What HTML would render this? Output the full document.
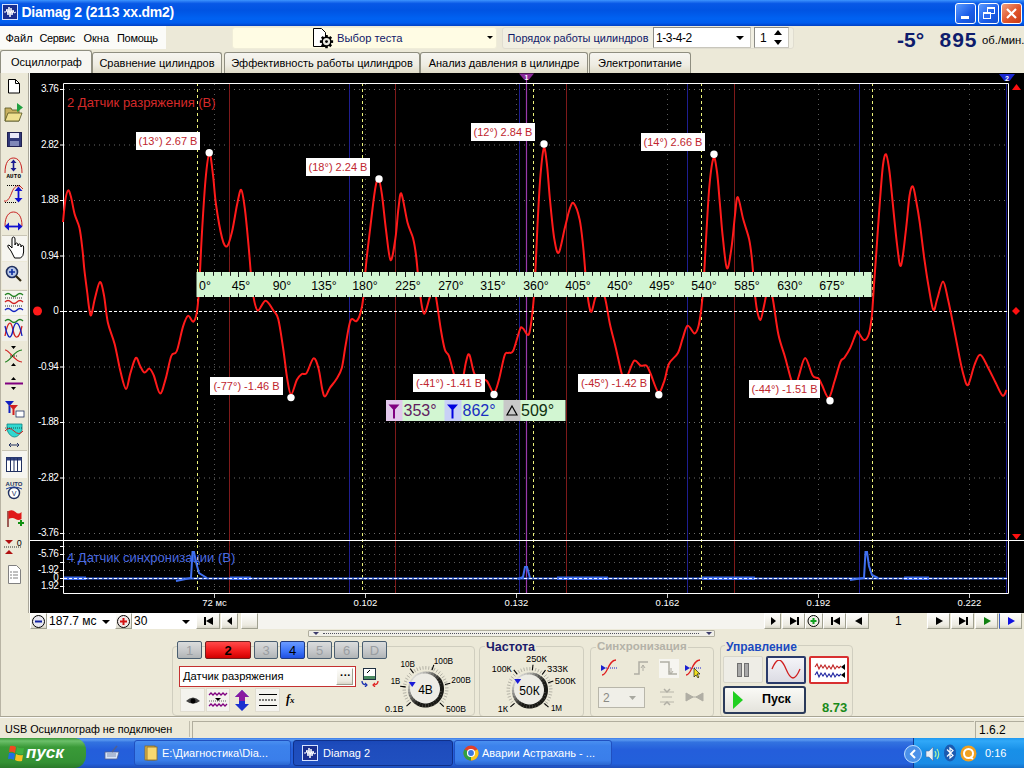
<!DOCTYPE html>
<html><head><meta charset="utf-8">
<style>
*{box-sizing:border-box;margin:0;padding:0}
html,body{width:1024px;height:768px;overflow:hidden;background:#ECE9D8;font-family:"Liberation Sans",sans-serif;font-size:11px;color:#000;position:relative}
.a{position:absolute}
.t{position:absolute;white-space:nowrap;line-height:1}
#title{left:0;top:0;width:1024px;height:26px;background:linear-gradient(#3D95FF 0%,#2A7CF4 5%,#0858E6 14%,#0054E3 40%,#0062F2 72%,#005CEE 88%,#0040C4 100%)}
.wbtn{position:absolute;top:3px;width:21px;height:21px;border:1px solid #fff;border-radius:3px;background:linear-gradient(135deg,#5B9BFF,#1A5CE8 60%,#1450D0)}
.tab{position:absolute;top:52px;height:21px;border:1px solid #8F8E80;border-bottom:none;border-radius:3px 3px 0 0;background:linear-gradient(#F6F5F0,#EEECE2 60%,#E0DCC8)}
.tab span{position:absolute;top:5px;left:0;right:0;text-align:center;font-size:11px;white-space:nowrap;line-height:1}
.tbi{position:absolute;left:3px;width:23px}
.btn{position:absolute;background:linear-gradient(#FDFDFB,#ECEAE0 80%,#D8D5C8);border:1px solid #fff;border-right-color:#A0A090;border-bottom-color:#A0A090}
.grp{position:absolute;border:1px solid #D0CEBF;border-radius:4px}
.chb{position:absolute;top:641px;height:18px;border:1px solid #4A5E70;border-radius:2px;background:linear-gradient(#DADCDC,#C4C6C8 60%,#B0B4B6);color:#9A9EA2;font-size:13px;text-align:center;line-height:17px}
.chb.red{background:linear-gradient(#FF4A4A,#F01818 60%,#D00000);color:#000;font-weight:bold;border-color:#702020}
.chb.blue{background:linear-gradient(#6A9AFF,#3A72F8 60%,#2050E0);color:#000;border-color:#203A80}
.tsk{position:absolute;top:740px;height:26px;border-radius:3px;background:linear-gradient(#4A90F0,#3C82EC 20%,#3A7EEA 80%,#2A66D0);border:1px solid #2050C0}
.tsk.act{background:linear-gradient(#1A48B8,#1E4CBC 20%,#2050C0);border-color:#10308A}
</style></head><body>

<!-- Title bar -->
<div id="title" class="a">
  <div class="a" style="left:2px;top:4px;width:16px;height:16px;background:#1A2F8F;border:1px solid #D8E4FF"></div>
  <svg class="a" style="left:2px;top:4px" width="16" height="16"><polyline points="2,8 4,8 5,5 6,11 7,3 8,13 9,4 10,11 11,6 12,9 14,8" fill="none" stroke="#fff" stroke-width="1"/></svg>
  <div class="t" style="left:21.5px;top:5px;font-size:14px;font-weight:bold;color:#fff;letter-spacing:-0.25px">Diamag 2 (2113 xx.dm2)</div>
  <div class="wbtn" style="left:955px"><div class="a" style="left:5px;top:12px;width:8px;height:3px;background:#fff"></div></div>
  <div class="wbtn" style="left:978px"><div class="a" style="left:8px;top:3px;width:8px;height:7px;border:1px solid #fff;border-top-width:2px"></div><div class="a" style="left:4px;top:8px;width:8px;height:7px;border:1px solid #fff;border-top-width:2px;background:#2E6CF0"></div></div>
  <div class="wbtn" style="left:1001px;background:linear-gradient(135deg,#F0A080,#E0542A 55%,#C83A14)"><svg class="a" style="left:3px;top:3px" width="13" height="13"><path d="M2,2 L11,11 M11,2 L2,11" stroke="#fff" stroke-width="2.2"/></svg></div>
</div>

<!-- Menu -->
<div class="a" style="left:0;top:26px;width:166px;height:23px;background:#FBFBF8"></div>
<div class="t" style="left:5.5px;top:33px;font-size:11px">Файл</div><div class="t" style="left:39.5px;top:33px;font-size:11px;letter-spacing:-0.4px">Сервис</div><div class="t" style="left:83.5px;top:33px;font-size:11px">Окна</div><div class="t" style="left:117px;top:33px;font-size:11px;letter-spacing:-0.3px">Помощь</div>

<!-- Test combo -->
<div class="a" style="left:232px;top:27px;width:265px;height:22px;background:#FFFCE4;border-radius:3px;border:1px solid #F0EDD8"></div>
<svg class="a" style="left:312px;top:28px" width="24" height="21"><path d="M1.5,0.5 h8 l4,4 v14 h-12z" fill="#fff" stroke="#000" stroke-width="1"/><rect x="13.2" y="7.0" width="2.6" height="3" fill="#000" transform="rotate(0 14.5 13.6)"/><rect x="13.2" y="7.0" width="2.6" height="3" fill="#000" transform="rotate(45 14.5 13.6)"/><rect x="13.2" y="7.0" width="2.6" height="3" fill="#000" transform="rotate(90 14.5 13.6)"/><rect x="13.2" y="7.0" width="2.6" height="3" fill="#000" transform="rotate(135 14.5 13.6)"/><rect x="13.2" y="7.0" width="2.6" height="3" fill="#000" transform="rotate(180 14.5 13.6)"/><rect x="13.2" y="7.0" width="2.6" height="3" fill="#000" transform="rotate(225 14.5 13.6)"/><rect x="13.2" y="7.0" width="2.6" height="3" fill="#000" transform="rotate(270 14.5 13.6)"/><rect x="13.2" y="7.0" width="2.6" height="3" fill="#000" transform="rotate(315 14.5 13.6)"/><circle cx="14.5" cy="13.6" r="4.3" fill="#E8E8E0" stroke="#000" stroke-width="1.4"/><circle cx="14.5" cy="13.6" r="1.4" fill="#000"/></svg>
<div class="t" style="left:337px;top:32.5px;font-size:11.2px;color:#101868">Выбор теста</div>
<div class="a" style="left:487px;top:36px;width:0;height:0;border-left:3px solid transparent;border-right:3px solid transparent;border-top:3px solid #000"></div>

<div class="a" style="left:502px;top:27px;width:292px;height:22px;background:#F1EFE2;border-radius:3px;border:1px solid #E0DDD0"></div>
<div class="t" style="left:507.5px;top:32.5px;font-size:10.9px;color:#101868">Порядок работы цилиндров</div>
<div class="a" style="left:653px;top:27px;width:98px;height:21px;background:#fff;border:1px solid #8A8A86;border-right-color:#C8C6BC;border-bottom-color:#C8C6BC"></div>
<div class="t" style="left:656px;top:31.5px;font-size:12px;letter-spacing:-0.4px">1-3-4-2</div>
<div class="a" style="left:736px;top:36px;width:0;height:0;border-left:4px solid transparent;border-right:4px solid transparent;border-top:4px solid #000"></div>
<div class="a" style="left:754px;top:27px;width:35px;height:21px;background:#fff;border:1px solid #8A8A86;border-right-color:#C8C6BC;border-bottom-color:#C8C6BC"></div>
<div class="t" style="left:760px;top:31.5px;font-size:12px">1</div>
<div class="a" style="left:774px;top:30px;width:0;height:0;border-left:4px solid transparent;border-right:4px solid transparent;border-bottom:5px solid #000"></div>
<div class="a" style="left:774px;top:40px;width:0;height:0;border-left:4px solid transparent;border-right:4px solid transparent;border-top:5px solid #000"></div>

<div class="t" style="left:897px;top:29px;font-size:21px;font-weight:bold;color:#0E1C6C">-5°</div>
<div class="t" style="left:939.5px;top:29px;font-size:21px;font-weight:bold;color:#0E1C6C;letter-spacing:1px">895</div>
<div class="t" style="left:982px;top:35px;font-size:11.3px;color:#000">об./мин.</div>

<!-- Tabs -->
<div class="tab" style="left:224px;width:196px"><span>Эффективность работы цилиндров</span></div>
<div class="tab" style="left:420px;width:168px"><span>Анализ давления в цилиндре</span></div>
<div class="tab" style="left:589px;width:102px"><span>Электропитание</span></div>
<div class="tab" style="left:92px;width:130px"><span>Сравнение цилиндров</span></div>
<div class="tab" style="left:0;top:50px;width:92px;height:23px;background:#F7F6F1"><span style="top:6px;left:1px">Осциллограф</span></div>

<!-- Left toolbar -->
<div class="a" style="left:0;top:73px;width:29px;height:540px;background:#ECE9D8"></div>
<div class="a" style="left:0;top:73px;width:1px;height:643px;background:#B8B4A4"></div>
<div class="a" style="left:28px;top:73px;width:1px;height:540px;background:#A8A598"></div><div class="a" style="left:29px;top:73px;width:1px;height:540px;background:#F8F8F4"></div>
<div class="a" style="left:2px;top:235px;width:25px;height:26px;background:#F6F5F0;border-top:1px solid #C9C5B5"></div>
<div class="a" style="left:2px;top:262px;width:25px;height:27px;background:#EFEDE4"></div>
<div class="a" style="left:2px;top:290px;width:25px;height:25px;background:#F6F5F0;border-top:1px solid #C9C5B5"></div>
<div class="a" style="left:2px;top:316px;width:25px;height:25px;background:#F1F0E8"></div>
<div class="a" style="left:2px;top:450px;width:25px;height:28px;background:#F6F5F0;border-top:1px solid #C9C5B5"></div>
<svg class="a" style="left:0;top:73px" width="29" height="540" viewBox="0 73 29 540">
 <!-- new doc -->
 <path d="M8.5,79.5 h7 l4,4 v9.5 h-11z" fill="#fff" stroke="#000"/><path d="M15.5,79.5 v4 h4" fill="none" stroke="#000"/>
 <!-- open folder -->
 <path d="M5,108 h6 l1,2 h7 v11 h-14z" fill="#C8B060" stroke="#505020" stroke-width="0.8"/>
 <path d="M5,121 l3,-8 h14 l-3,8z" fill="#F0E090" stroke="#505020" stroke-width="0.8"/>
 <path d="M17,103 l6,4.5 l-6,4.5z" fill="#20A040"/>
 <!-- save -->
 <rect x="7.5" y="132.5" width="14" height="14" fill="#303878" stroke="#202050"/><rect x="10" y="133" width="9" height="5" fill="#E8E8F8"/><rect x="10" y="141" width="9" height="5" fill="#8088B8"/>
 <!-- auto arc -->
 <path d="M5,173 C5,162 9,158 13.5,158 C18,158 22,162 22,173" fill="none" stroke="#C82020" stroke-width="1"/>
 <path d="M13.5,162 v7" stroke="#1A1A90" stroke-width="1.6"/><path d="M10.5,163 l3,-3.5 l3,3.5z M10.5,168 l3,3.5 l3,-3.5z" fill="#1A1A90"/>
 <text x="13.8" y="177.5" text-anchor="middle" font-size="5.8" font-weight="bold" fill="#000" font-family="Liberation Mono" letter-spacing="0.2">AUTO</text>
 <!-- scale sigmoid -->
 <path d="M4,201 C8,202 10,197 12,192 C14,187 17,185 20,186 L23,189" fill="none" stroke="#C82020" stroke-width="1"/>
 <path d="M7,185.5 h13 M5,202.5 h11" stroke="#000" stroke-width="1" stroke-dasharray="1 1"/>
 <path d="M18.5,190 v9" stroke="#1010D0" stroke-width="1.8"/><path d="M14.5,191 l4,-4.5 l4,4.5z M14.5,198 l4,4.5 l4,-4.5z" fill="#1010D0"/>
 <!-- horiz arc -->
 <path d="M5,226 C5,216 9,212 13.5,212 C18,212 22,216 22,226" fill="none" stroke="#C82020" stroke-width="1"/>
 <path d="M8,226.5 h11" stroke="#1010D0" stroke-width="1.8"/><path d="M9,222.5 l-4.5,4 l4.5,4z M18,222.5 l4.5,4 l-4.5,4z" fill="#1010D0"/>
 <!-- hand -->
 <path d="M11,251 l-3,-4 q-1,-2 1,-2 l3,3 v-9 q0,-2 1.5,-2 q1.5,0 1.5,2 v6 q0,-2 1.5,-2 q1.5,0 1.5,2 v1 q0,-2 1.5,-2 q1.5,0 1.5,2 v1 q0,-1.5 1.3,-1.5 q1.3,0 1.3,1.5 v5 q0,4 -3,6 h-6z" fill="#fff" stroke="#000" stroke-width="1"/>
 <!-- zoom -->
 <circle cx="12" cy="272" r="5.5" fill="#B8C8E8" stroke="#203060" stroke-width="1.6"/><path d="M9,272 h6 M12,269 v6" stroke="#1030A0" stroke-width="1.6"/><path d="M16,276 l5,5" stroke="#302810" stroke-width="2.2"/>
 <!-- waves stacked -->
 <path d="M5,295 q3,-3 6,0 t6,0 t6,0" fill="none" stroke="#208020" stroke-width="1.3"/>
 <path d="M5,298 h18 M5,306 h18" stroke="#000" stroke-width="0.8" stroke-dasharray="1 1"/>
 <path d="M5,302 q3,-3 6,0 t6,0 t6,0" fill="none" stroke="#D02020" stroke-width="1.3"/>
 <path d="M5,310 q3,-3 6,0 t6,0 t6,0" fill="none" stroke="#1020C0" stroke-width="1.3"/>
 <!-- overlap waves -->
 <path d="M5,321 q3,-3 6,0 t6,0 t6,0" fill="none" stroke="#208020" stroke-width="1.3"/>
 <path d="M5,336 C8,320 11,320 13,330 S19,340 22,326" fill="none" stroke="#D02020" stroke-width="1.3"/>
 <path d="M5,326 C8,340 11,340 13,330 S19,320 22,336" fill="none" stroke="#1020C0" stroke-width="1.3"/>
 <!-- cross -->
 <path d="M5,350 C10,350 14,362 22,362" fill="none" stroke="#D02020" stroke-width="1.2"/><path d="M5,362 C10,362 14,350 22,350" fill="none" stroke="#208020" stroke-width="1.2"/>
 <path d="M10,356 h8" stroke="#000" stroke-width="0.8" stroke-dasharray="1 1"/>
 <path d="M11,346 h5 l-2.5,3z M11,366 h5 l-2.5,-3z" fill="#000"/>
 <!-- cursor line -->
 <path d="M11,380 h5 l-2.5,-3z" fill="#000"/><rect x="5" y="382.5" width="18" height="2" fill="#800080"/><path d="M11,387 h5 l-2.5,3z" fill="#000"/>
 <!-- filter -->
 <path d="M5,401 h9 l-3.5,4 v8 h-2 v-8z" fill="#1020C0"/><path d="M9,405 h9 l-3.5,4 v6 h-2 v-6z" fill="#D02020"/><rect x="16" y="411" width="8" height="6" fill="#fff" stroke="#203060" stroke-width="0.8"/>
 <!-- cyan -->
 <path d="M7,424 h15 v6 q-3,7 -7.5,7 q-4.5,0 -7.5,-7z" fill="#30D8D0" stroke="#108080" stroke-width="0.8"/>
 <path d="M5,431 q4,-5 9,0 t9,0" fill="none" stroke="#D02020" stroke-width="1"/><path d="M5,428 h18" stroke="#000" stroke-width="0.6" stroke-dasharray="1 1"/>
 <path d="M9,445 h10 M11,443 l-2,2 l2,2 M17,443 l2,2 l-2,2" fill="none" stroke="#203060" stroke-width="1"/>
 <!-- table -->
 <rect x="6.5" y="457.5" width="15" height="14" fill="#fff" stroke="#203060"/><rect x="6.5" y="457.5" width="15" height="3" fill="#304080"/><path d="M10.5,458 v14 M14,458 v14 M17.5,458 v14" stroke="#203060"/>
 <!-- auto V -->
 <text x="14" y="486" text-anchor="middle" font-size="6" font-weight="bold" fill="#203060" font-family="Liberation Sans">AUTO</text>
 <circle cx="14" cy="493" r="5.5" fill="#fff" stroke="#203060" stroke-width="1.4"/><text x="14" y="496" text-anchor="middle" font-size="7" fill="#203060" font-family="Liberation Sans">V</text>
 <path d="M6,489 q8,-4 16,0" fill="none" stroke="#2040A0" stroke-width="1"/>
 <!-- flag -->
 <path d="M8,511 v16" stroke="#600" stroke-width="1.2"/><path d="M8.5,511 q4,-2 7,1 t6,0 v7 q-3,2 -6,0 t-7,0z" fill="#E01818"/><path d="M18,523 h6 M21,520 v6" stroke="#109010" stroke-width="2"/>
 <!-- zero -->
 <path d="M5,540 h8 l-4,4z M5,554 h8 l-4,-4z" fill="#B01010"/><path d="M4,547 h18" stroke="#000" stroke-width="0.8" stroke-dasharray="1 1"/>
 <text x="19.2" y="545.5" text-anchor="middle" font-size="9" fill="#000" font-family="Liberation Sans">0</text>
 <!-- doc list -->
 <path d="M8.5,565.5 h8 l4,4 v14 h-12z" fill="#fff" stroke="#808080"/><path d="M10,572 h2 M10,575 h2 M10,578 h2 M13,572 h5 M13,575 h5 M13,578 h5" stroke="#606060" stroke-width="0.8"/>
</svg>
<svg class="a" style="left:29px;top:73px" width="995" height="540" viewBox="29 73 995 540">
<rect x="30" y="73" width="994" height="540" fill="#000"/>
<line x1="64" y1="89.5" x2="1007" y2="89.5" stroke="#6a6a6a" stroke-width="1" stroke-dasharray="1 4"/>
<line x1="64" y1="145.0" x2="1007" y2="145.0" stroke="#6a6a6a" stroke-width="1" stroke-dasharray="1 4"/>
<line x1="64" y1="200.5" x2="1007" y2="200.5" stroke="#6a6a6a" stroke-width="1" stroke-dasharray="1 4"/>
<line x1="64" y1="256.0" x2="1007" y2="256.0" stroke="#6a6a6a" stroke-width="1" stroke-dasharray="1 4"/>
<line x1="64" y1="367.0" x2="1007" y2="367.0" stroke="#6a6a6a" stroke-width="1" stroke-dasharray="1 4"/>
<line x1="64" y1="422.5" x2="1007" y2="422.5" stroke="#6a6a6a" stroke-width="1" stroke-dasharray="1 4"/>
<line x1="64" y1="478.0" x2="1007" y2="478.0" stroke="#6a6a6a" stroke-width="1" stroke-dasharray="1 4"/>
<line x1="64" y1="533.5" x2="1007" y2="533.5" stroke="#6a6a6a" stroke-width="1" stroke-dasharray="1 4"/>
<line x1="214.5" y1="84" x2="214.5" y2="593" stroke="#5a5a5a" stroke-width="1" stroke-dasharray="1 4"/>
<line x1="365.5" y1="84" x2="365.5" y2="593" stroke="#5a5a5a" stroke-width="1" stroke-dasharray="1 4"/>
<line x1="516.5" y1="84" x2="516.5" y2="593" stroke="#5a5a5a" stroke-width="1" stroke-dasharray="1 4"/>
<line x1="667.5" y1="84" x2="667.5" y2="593" stroke="#5a5a5a" stroke-width="1" stroke-dasharray="1 4"/>
<line x1="818.5" y1="84" x2="818.5" y2="593" stroke="#5a5a5a" stroke-width="1" stroke-dasharray="1 4"/>
<line x1="969.5" y1="84" x2="969.5" y2="593" stroke="#5a5a5a" stroke-width="1" stroke-dasharray="1 4"/>
<line x1="64" y1="546.5" x2="1007" y2="546.5" stroke="#5a5a5a" stroke-width="1" stroke-dasharray="1 4"/>
<line x1="64" y1="554.5" x2="1007" y2="554.5" stroke="#5a5a5a" stroke-width="1" stroke-dasharray="1 4"/>
<line x1="64" y1="562.5" x2="1007" y2="562.5" stroke="#5a5a5a" stroke-width="1" stroke-dasharray="1 4"/>
<line x1="64" y1="570.5" x2="1007" y2="570.5" stroke="#5a5a5a" stroke-width="1" stroke-dasharray="1 4"/>
<line x1="64" y1="586.5" x2="1007" y2="586.5" stroke="#5a5a5a" stroke-width="1" stroke-dasharray="1 4"/>
<line x1="229.5" y1="84" x2="229.5" y2="593" stroke="#7E1A1A" stroke-width="1"/>
<line x1="395.5" y1="84" x2="395.5" y2="593" stroke="#7E1A1A" stroke-width="1"/>
<line x1="566.5" y1="84" x2="566.5" y2="593" stroke="#7E1A1A" stroke-width="1"/>
<line x1="734.5" y1="84" x2="734.5" y2="593" stroke="#7E1A1A" stroke-width="1"/>
<line x1="349.5" y1="84" x2="349.5" y2="593" stroke="#1E1E90" stroke-width="1"/>
<line x1="519.5" y1="84" x2="519.5" y2="593" stroke="#1E1E90" stroke-width="1"/>
<line x1="687.5" y1="84" x2="687.5" y2="593" stroke="#1E1E90" stroke-width="1"/>
<line x1="859.5" y1="84" x2="859.5" y2="593" stroke="#1E1E90" stroke-width="1"/>
<line x1="1006.5" y1="84" x2="1006.5" y2="593" stroke="#1E1E90" stroke-width="1"/>
<line x1="526.5" y1="78" x2="526.5" y2="593" stroke="#9a3aaa" stroke-width="1.2"/>
<line x1="197.5" y1="83" x2="197.5" y2="593" stroke="#ECF27A" stroke-width="1" stroke-dasharray="3 3"/>
<line x1="362.5" y1="83" x2="362.5" y2="593" stroke="#ECF27A" stroke-width="1" stroke-dasharray="3 3"/>
<line x1="533.5" y1="83" x2="533.5" y2="593" stroke="#ECF27A" stroke-width="1" stroke-dasharray="3 3"/>
<line x1="701.5" y1="83" x2="701.5" y2="593" stroke="#ECF27A" stroke-width="1" stroke-dasharray="3 3"/>
<line x1="872.5" y1="83" x2="872.5" y2="593" stroke="#ECF27A" stroke-width="1" stroke-dasharray="3 3"/>
<line x1="64" y1="311.5" x2="1007" y2="311.5" stroke="#fff" stroke-width="1" stroke-dasharray="3 2"/>
<path d="M63.5,593.5 V83.5 H1008.5 V593.5 H63.5" fill="none" stroke="#fff" stroke-width="1"/>
<line x1="30" y1="540.5" x2="1024" y2="540.5" stroke="#fff" stroke-width="1"/>
<line x1="60" y1="89.5" x2="63" y2="89.5" stroke="#fff"/>
<text x="58.4" y="92.3" text-anchor="end" font-size="10" letter-spacing="-0.5" fill="#fff" font-family="Liberation Sans">3.76</text>
<line x1="60" y1="145.0" x2="63" y2="145.0" stroke="#fff"/>
<text x="58.4" y="147.8" text-anchor="end" font-size="10" letter-spacing="-0.5" fill="#fff" font-family="Liberation Sans">2.82</text>
<line x1="60" y1="200.5" x2="63" y2="200.5" stroke="#fff"/>
<text x="58.4" y="203.3" text-anchor="end" font-size="10" letter-spacing="-0.5" fill="#fff" font-family="Liberation Sans">1.88</text>
<line x1="60" y1="256.0" x2="63" y2="256.0" stroke="#fff"/>
<text x="58.4" y="258.8" text-anchor="end" font-size="10" letter-spacing="-0.5" fill="#fff" font-family="Liberation Sans">0.94</text>
<line x1="60" y1="311.5" x2="63" y2="311.5" stroke="#fff"/>
<text x="58.4" y="314.3" text-anchor="end" font-size="10" letter-spacing="-0.5" fill="#fff" font-family="Liberation Sans">0</text>
<line x1="60" y1="367.0" x2="63" y2="367.0" stroke="#fff"/>
<text x="58.4" y="369.8" text-anchor="end" font-size="10" letter-spacing="-0.5" fill="#fff" font-family="Liberation Sans">-0.94</text>
<line x1="60" y1="422.5" x2="63" y2="422.5" stroke="#fff"/>
<text x="58.4" y="425.3" text-anchor="end" font-size="10" letter-spacing="-0.5" fill="#fff" font-family="Liberation Sans">-1.88</text>
<line x1="60" y1="478.0" x2="63" y2="478.0" stroke="#fff"/>
<text x="58.4" y="480.8" text-anchor="end" font-size="10" letter-spacing="-0.5" fill="#fff" font-family="Liberation Sans">-2.82</text>
<line x1="60" y1="533.5" x2="63" y2="533.5" stroke="#fff"/>
<text x="58.4" y="536.3" text-anchor="end" font-size="10" letter-spacing="-0.5" fill="#fff" font-family="Liberation Sans">-3.76</text>
<line x1="60" y1="546.5" x2="63" y2="546.5" stroke="#fff"/>
<line x1="60" y1="554.5" x2="63" y2="554.5" stroke="#fff"/>
<text x="58.4" y="557.3" text-anchor="end" font-size="10" letter-spacing="-0.5" fill="#fff" font-family="Liberation Sans">-5.76</text>
<line x1="60" y1="562.5" x2="63" y2="562.5" stroke="#fff"/>
<line x1="60" y1="570.5" x2="63" y2="570.5" stroke="#fff"/>
<text x="58.4" y="573.3" text-anchor="end" font-size="10" letter-spacing="-0.5" fill="#fff" font-family="Liberation Sans">-1.92</text>
<line x1="60" y1="578.5" x2="63" y2="578.5" stroke="#fff"/>
<text x="58.4" y="581.3" text-anchor="end" font-size="10" letter-spacing="-0.5" fill="#fff" font-family="Liberation Sans">0</text>
<line x1="60" y1="586.5" x2="63" y2="586.5" stroke="#fff"/>
<text x="58.4" y="589.3" text-anchor="end" font-size="10" letter-spacing="-0.5" fill="#fff" font-family="Liberation Sans">1.92</text>
<line x1="214.5" y1="594" x2="214.5" y2="598" stroke="#ccc"/>
<text x="214.5" y="606" text-anchor="middle" font-size="9.5" fill="#fff" font-family="Liberation Sans">72 мс</text>
<line x1="365.5" y1="594" x2="365.5" y2="598" stroke="#ccc"/>
<text x="365.5" y="606" text-anchor="middle" font-size="9.5" fill="#fff" font-family="Liberation Sans">0.102</text>
<line x1="516.5" y1="594" x2="516.5" y2="598" stroke="#ccc"/>
<text x="516.5" y="606" text-anchor="middle" font-size="9.5" fill="#fff" font-family="Liberation Sans">0.132</text>
<line x1="667.5" y1="594" x2="667.5" y2="598" stroke="#ccc"/>
<text x="667.5" y="606" text-anchor="middle" font-size="9.5" fill="#fff" font-family="Liberation Sans">0.162</text>
<line x1="818.5" y1="594" x2="818.5" y2="598" stroke="#ccc"/>
<text x="818.5" y="606" text-anchor="middle" font-size="9.5" fill="#fff" font-family="Liberation Sans">0.192</text>
<line x1="969.5" y1="594" x2="969.5" y2="598" stroke="#ccc"/>
<text x="969.5" y="606" text-anchor="middle" font-size="9.5" fill="#fff" font-family="Liberation Sans">0.222</text>
<text x="67" y="106.5" font-size="13" fill="#D42A2A" font-family="Liberation Sans">2 Датчик разряжения (В)</text>
<text x="67" y="562" font-size="13" fill="#4A6AE0" font-family="Liberation Sans">4 Датчик синхронизации (В)</text>
<line x1="64" y1="578.5" x2="1007" y2="578.5" stroke="#3A68E8" stroke-width="2"/>
<rect x="64" y="576.5" width="22" height="3.5" fill="#3A68E8"/>
<rect x="230" y="576.5" width="21" height="3.5" fill="#3A68E8"/>
<rect x="557" y="576.5" width="51" height="3.5" fill="#3A68E8"/>
<rect x="702" y="576.5" width="53" height="3.5" fill="#3A68E8"/>
<rect x="904" y="576.5" width="25" height="3.5" fill="#3A68E8"/>
<line x1="64" y1="578.5" x2="1007" y2="578.5" stroke="#fff" stroke-width="1" stroke-dasharray="3 2"/>
<path d="M176,581 L191,578 L192.5,552 L194,552 L196.5,564 L199,573 L207,578" fill="none" stroke="#4070F0" stroke-width="2"/>
<path d="M518,579 L523,577 L525,567 L527,567 L530,578" fill="none" stroke="#4070F0" stroke-width="2"/>
<path d="M850,580 L864,578 L865.5,552 L867,552 L869,566 L872,575 L878,578" fill="none" stroke="#4070F0" stroke-width="2"/>
<path d="M63.0,222.0 C63.4,218.2 64.6,204.3 65.5,199.0 C66.4,193.7 67.3,190.7 68.2,190.4 C69.1,190.1 69.9,193.1 71.0,197.0 C72.1,200.9 73.2,208.8 74.6,214.0 C76.0,219.2 78.2,222.0 79.5,228.0 C80.8,234.0 81.7,243.0 82.5,250.0 C83.3,257.0 83.6,262.8 84.4,270.0 C85.2,277.2 86.5,286.5 87.3,293.0 C88.1,299.5 88.6,305.3 89.3,309.0 C90.0,312.7 90.3,316.9 91.2,315.0 C92.2,313.1 93.7,302.8 95.2,297.3 C96.7,291.8 98.5,282.4 100.0,282.1 C101.5,281.8 102.7,288.6 104.0,295.4 C105.3,302.2 106.1,314.6 107.9,322.7 C109.7,330.8 112.6,336.0 114.7,344.2 C116.8,352.4 118.6,364.1 120.5,371.6 C122.4,379.1 124.4,388.8 126.0,389.1 C127.6,389.4 128.7,378.7 130.3,373.5 C131.9,368.3 134.2,359.2 135.8,357.9 C137.4,356.6 138.6,363.3 140.0,365.7 C141.4,368.1 142.8,372.0 144.4,372.5 C146.0,373.0 147.9,368.1 149.5,368.6 C151.1,369.1 152.0,371.4 153.8,375.5 C155.5,379.6 158.0,392.8 160.0,393.4 C162.0,394.0 163.6,385.6 165.5,379.4 C167.4,373.2 169.4,360.7 171.3,356.0 C173.2,351.3 174.9,355.9 176.8,351.0 C178.8,346.1 181.1,332.5 183.0,326.6 C184.9,320.8 186.3,316.7 188.0,315.9 C189.7,315.1 191.8,322.3 193.2,321.8 C194.6,321.3 195.7,318.3 196.7,313.0 C197.7,307.7 198.1,303.5 199.0,290.0 C199.9,276.5 200.9,250.3 202.0,232.0 C203.1,213.7 204.3,193.1 205.5,180.0 C206.7,166.9 208.2,154.5 209.4,153.7 C210.7,152.9 211.9,166.5 213.0,175.0 C214.1,183.5 214.5,194.1 216.0,204.5 C217.5,214.9 220.2,230.7 222.0,237.7 C223.8,244.7 225.3,247.4 227.0,246.4 C228.7,245.4 230.3,238.7 232.0,231.8 C233.7,224.9 235.5,212.0 237.0,205.0 C238.5,198.0 239.9,189.0 241.2,189.8 C242.6,190.6 243.8,200.8 245.0,210.0 C246.2,219.2 247.5,234.2 248.5,245.0 C249.5,255.8 250.2,266.3 251.0,275.0 C251.8,283.7 252.4,291.1 253.5,297.0 C254.6,302.9 255.8,309.9 257.8,310.5 C259.8,311.1 263.0,300.7 265.6,300.7 C268.2,300.7 271.3,307.4 273.4,310.5 C275.5,313.6 276.7,312.9 278.3,319.3 C279.9,325.7 281.7,338.8 283.2,348.6 C284.7,358.4 285.8,370.2 287.1,377.9 C288.4,385.5 289.4,394.2 291.0,394.5 C292.6,394.8 295.1,383.2 296.9,379.8 C298.7,376.4 300.2,375.1 301.8,374.0 C303.4,372.9 304.7,375.6 306.6,373.0 C308.6,370.4 311.5,359.2 313.5,358.4 C315.5,357.6 316.9,362.8 318.4,368.0 C319.9,373.2 321.2,384.9 322.3,389.6 C323.4,394.3 323.9,396.7 325.2,396.4 C326.5,396.1 328.2,390.5 330.0,387.7 C331.8,384.9 334.0,383.1 336.0,379.8 C338.0,376.5 340.2,373.9 341.8,368.0 C343.4,362.1 344.2,352.6 345.7,344.7 C347.2,336.8 348.8,324.2 350.6,320.3 C352.4,316.4 354.8,322.4 356.4,321.2 C358.0,320.1 359.2,317.3 360.4,313.4 C361.5,309.5 362.4,305.9 363.3,297.8 C364.2,289.7 364.9,276.3 366.0,265.0 C367.1,253.7 368.5,242.5 370.0,230.0 C371.5,217.5 373.6,198.5 375.0,190.0 C376.4,181.5 377.3,178.2 378.5,179.0 C379.7,179.8 380.8,186.5 382.0,195.0 C383.2,203.5 384.6,219.2 386.0,230.0 C387.4,240.8 389.0,258.8 390.6,260.1 C392.2,261.4 394.2,246.4 395.5,237.7 C396.8,229.0 397.5,215.3 398.5,208.0 C399.5,200.7 399.9,191.3 401.4,193.7 C402.9,196.1 405.6,215.1 407.5,222.5 C409.4,229.9 411.6,232.6 413.0,238.0 C414.4,243.4 415.0,247.2 416.0,255.0 C417.0,262.8 418.0,276.3 419.0,285.0 C420.0,293.7 421.1,302.2 422.0,307.0 C422.9,311.8 423.5,313.8 424.3,313.8 C425.1,313.8 426.1,309.8 427.0,307.0 C427.9,304.2 428.8,299.9 429.8,297.2 C430.8,294.5 432.0,291.0 433.0,291.0 C434.0,291.0 434.7,290.7 436.0,297.2 C437.3,303.7 439.4,321.2 440.9,330.0 C442.4,338.8 443.6,345.5 444.9,349.8 C446.2,354.1 447.3,351.8 448.8,355.7 C450.3,359.6 452.2,368.2 453.7,373.3 C455.2,378.4 456.6,384.4 458.0,386.0 C459.4,387.6 460.7,387.0 462.0,383.0 C463.3,379.0 464.8,366.7 466.0,362.0 C467.2,357.3 467.9,352.8 469.3,354.7 C470.7,356.6 472.4,369.4 474.2,373.3 C476.0,377.2 477.9,376.7 480.0,378.0 C482.1,379.3 484.6,378.5 486.9,381.0 C489.2,383.5 491.8,392.8 493.7,392.8 C495.6,392.8 496.8,387.2 498.6,381.0 C500.4,374.8 502.9,360.4 504.5,355.7 C506.1,351.0 506.9,353.6 508.4,352.8 C509.8,352.0 511.3,354.7 513.2,350.8 C515.1,346.9 518.4,333.0 520.0,329.3 C521.6,325.6 521.5,327.6 523.0,328.4 C524.5,329.2 527.3,337.5 528.9,334.2 C530.5,330.9 531.8,317.8 532.8,308.8 C533.8,299.8 534.2,294.0 535.0,280.0 C535.8,266.0 536.6,242.5 537.5,225.0 C538.4,207.5 539.4,187.8 540.5,175.0 C541.6,162.2 542.8,149.8 543.9,148.1 C545.0,146.4 546.0,156.3 547.0,165.0 C548.0,173.7 548.8,187.7 550.0,200.0 C551.2,212.3 552.8,230.1 554.3,238.9 C555.8,247.7 557.0,254.6 558.8,252.6 C560.5,250.6 563.1,234.6 565.0,227.2 C566.9,219.8 568.5,212.0 570.0,208.0 C571.5,204.0 572.2,201.5 573.8,203.4 C575.4,205.3 578.1,212.5 579.6,219.4 C581.1,226.3 581.9,234.9 583.0,245.0 C584.1,255.1 585.1,270.5 586.0,280.0 C586.9,289.5 587.6,296.7 588.5,302.0 C589.4,307.3 590.3,312.4 591.4,311.8 C592.5,311.1 593.9,301.6 595.3,298.0 C596.7,294.4 598.4,290.0 600.0,290.0 C601.6,290.0 603.3,292.2 605.0,298.0 C606.7,303.8 608.2,316.2 610.0,324.5 C611.8,332.8 613.9,339.8 615.8,347.9 C617.7,356.0 620.1,367.8 621.6,373.3 C623.1,378.8 623.9,381.0 625.0,381.0 C626.1,381.0 627.0,376.7 628.5,373.3 C630.0,369.9 632.3,361.9 634.3,360.6 C636.3,359.3 638.7,364.9 640.7,365.7 C642.8,366.5 645.0,364.4 646.6,365.7 C648.2,367.0 648.5,369.1 650.5,373.5 C652.5,377.9 656.0,390.7 658.3,392.0 C660.6,393.3 662.4,386.0 664.2,381.3 C666.0,376.6 666.7,368.5 669.0,363.8 C671.3,359.0 675.6,357.2 677.9,353.0 C680.2,348.8 681.1,342.9 682.7,338.4 C684.3,333.8 685.6,326.5 687.6,325.7 C689.6,324.9 692.7,333.4 694.5,333.5 C696.3,333.6 697.3,330.7 698.4,326.6 C699.5,322.5 700.4,315.9 701.3,309.0 C702.1,302.1 702.7,296.5 703.5,285.0 C704.3,273.5 705.0,256.7 706.0,240.0 C707.0,223.3 708.2,198.7 709.5,185.0 C710.8,171.3 712.4,160.3 713.6,158.1 C714.9,155.9 715.9,164.2 717.0,172.0 C718.1,179.8 719.0,194.1 720.0,205.0 C721.0,215.9 721.6,226.6 722.8,237.2 C724.0,247.8 725.5,266.8 727.0,268.4 C728.5,270.0 730.3,255.9 731.6,247.0 C732.9,238.1 734.0,223.3 735.0,215.0 C736.0,206.7 736.4,196.3 737.8,197.1 C739.2,197.9 741.4,212.6 743.3,219.6 C745.2,226.6 747.6,232.4 749.1,239.1 C750.6,245.8 751.1,251.5 752.0,260.0 C752.9,268.5 753.7,281.7 754.5,290.0 C755.3,298.3 756.0,305.0 757.0,310.0 C758.0,315.0 759.3,320.5 760.5,319.8 C761.7,319.1 762.9,310.6 764.0,306.0 C765.1,301.4 766.0,294.7 767.0,292.0 C768.0,289.3 769.0,288.7 770.0,290.0 C771.0,291.3 771.6,292.6 773.0,300.0 C774.4,307.4 776.4,324.9 778.4,334.5 C780.4,344.1 783.2,350.4 785.3,357.9 C787.4,365.4 789.5,374.5 791.1,379.4 C792.7,384.2 793.7,387.6 795.0,387.0 C796.3,386.4 797.3,380.4 799.0,375.5 C800.7,370.6 802.9,357.9 805.2,357.9 C807.5,357.9 810.4,372.1 812.6,375.5 C814.8,378.9 816.9,376.8 818.5,378.4 C820.1,380.0 820.3,381.8 822.0,385.0 C823.7,388.2 826.7,398.4 828.8,397.7 C830.9,397.0 832.6,387.0 834.6,381.0 C836.6,375.0 838.9,365.5 840.5,361.6 C842.1,357.7 842.8,360.0 844.4,357.7 C846.0,355.4 848.3,352.0 850.3,347.9 C852.2,343.8 854.8,335.9 856.1,333.2 C857.4,330.5 856.7,330.8 858.0,331.9 C859.3,333.0 862.2,339.6 864.0,340.0 C865.8,340.4 867.5,338.1 868.8,334.2 C870.1,330.3 870.9,324.1 871.8,316.6 C872.6,309.1 872.9,300.4 873.7,289.3 C874.5,278.2 875.5,264.9 876.5,250.0 C877.5,235.1 878.9,214.2 880.0,200.0 C881.1,185.8 882.0,172.6 883.0,165.0 C884.0,157.4 885.0,153.7 886.0,154.2 C887.0,154.7 888.1,162.3 889.0,168.0 C889.9,173.7 889.9,175.6 891.3,188.4 C892.6,201.2 895.5,232.2 897.1,245.0 C898.7,257.9 899.5,268.1 901.0,265.5 C902.5,262.9 904.6,241.0 906.0,229.4 C907.4,217.8 908.4,203.2 909.5,196.0 C910.6,188.8 911.7,185.7 912.8,186.4 C913.9,187.1 914.9,194.1 916.0,200.0 C917.1,205.9 918.2,211.6 919.6,221.6 C921.0,231.6 923.0,249.4 924.5,260.0 C926.0,270.6 926.9,277.1 928.4,285.4 C929.9,293.7 931.8,307.5 933.3,309.8 C934.8,312.1 935.6,303.7 937.2,299.0 C938.8,294.3 941.2,281.5 943.0,281.5 C944.8,281.5 946.3,292.2 947.9,299.0 C949.5,305.8 950.8,312.7 952.8,322.5 C954.8,332.3 957.8,348.9 959.6,357.7 C961.4,366.5 962.2,370.6 963.6,375.2 C965.0,379.8 966.2,386.6 968.0,385.0 C969.8,383.4 972.3,370.6 974.3,365.5 C976.3,360.4 977.9,354.4 980.2,354.7 C982.5,355.0 985.4,362.7 988.0,367.4 C990.6,372.1 993.4,378.3 995.8,383.0 C998.2,387.7 1000.8,394.6 1002.6,395.7 C1004.4,396.8 1005.9,390.9 1006.5,389.9" fill="none" stroke="#FF1A1A" stroke-width="2" stroke-linejoin="round"/>
<rect x="196.5" y="272" width="675" height="25" fill="#D2F6D2"/>
<line x1="204.5" y1="272" x2="204.5" y2="275.8" stroke="#1a1a1a" stroke-width="1"/>
<line x1="204.5" y1="295" x2="204.5" y2="297" stroke="#1a1a1a" stroke-width="1"/>
<line x1="213.5" y1="272" x2="213.5" y2="275.8" stroke="#1a1a1a" stroke-width="1"/>
<line x1="213.5" y1="295" x2="213.5" y2="297" stroke="#1a1a1a" stroke-width="1"/>
<line x1="221.5" y1="272" x2="221.5" y2="275.8" stroke="#1a1a1a" stroke-width="1"/>
<line x1="221.5" y1="295" x2="221.5" y2="297" stroke="#1a1a1a" stroke-width="1"/>
<line x1="230.5" y1="272" x2="230.5" y2="275.8" stroke="#1a1a1a" stroke-width="1"/>
<line x1="230.5" y1="295" x2="230.5" y2="297" stroke="#1a1a1a" stroke-width="1"/>
<line x1="238.5" y1="272" x2="238.5" y2="277" stroke="#1a1a1a" stroke-width="1"/>
<line x1="238.5" y1="293.5" x2="238.5" y2="297" stroke="#1a1a1a" stroke-width="1"/>
<line x1="246.5" y1="272" x2="246.5" y2="275.8" stroke="#1a1a1a" stroke-width="1"/>
<line x1="246.5" y1="295" x2="246.5" y2="297" stroke="#1a1a1a" stroke-width="1"/>
<line x1="254.5" y1="272" x2="254.5" y2="275.8" stroke="#1a1a1a" stroke-width="1"/>
<line x1="254.5" y1="295" x2="254.5" y2="297" stroke="#1a1a1a" stroke-width="1"/>
<line x1="263.5" y1="272" x2="263.5" y2="275.8" stroke="#1a1a1a" stroke-width="1"/>
<line x1="263.5" y1="295" x2="263.5" y2="297" stroke="#1a1a1a" stroke-width="1"/>
<line x1="271.5" y1="272" x2="271.5" y2="275.8" stroke="#1a1a1a" stroke-width="1"/>
<line x1="271.5" y1="295" x2="271.5" y2="297" stroke="#1a1a1a" stroke-width="1"/>
<line x1="279.5" y1="272" x2="279.5" y2="277" stroke="#1a1a1a" stroke-width="1"/>
<line x1="279.5" y1="293.5" x2="279.5" y2="297" stroke="#1a1a1a" stroke-width="1"/>
<line x1="287.5" y1="272" x2="287.5" y2="275.8" stroke="#1a1a1a" stroke-width="1"/>
<line x1="287.5" y1="295" x2="287.5" y2="297" stroke="#1a1a1a" stroke-width="1"/>
<line x1="296.5" y1="272" x2="296.5" y2="275.8" stroke="#1a1a1a" stroke-width="1"/>
<line x1="296.5" y1="295" x2="296.5" y2="297" stroke="#1a1a1a" stroke-width="1"/>
<line x1="304.5" y1="272" x2="304.5" y2="275.8" stroke="#1a1a1a" stroke-width="1"/>
<line x1="304.5" y1="295" x2="304.5" y2="297" stroke="#1a1a1a" stroke-width="1"/>
<line x1="313.5" y1="272" x2="313.5" y2="275.8" stroke="#1a1a1a" stroke-width="1"/>
<line x1="313.5" y1="295" x2="313.5" y2="297" stroke="#1a1a1a" stroke-width="1"/>
<line x1="321.5" y1="272" x2="321.5" y2="277" stroke="#1a1a1a" stroke-width="1"/>
<line x1="321.5" y1="293.5" x2="321.5" y2="297" stroke="#1a1a1a" stroke-width="1"/>
<line x1="329.5" y1="272" x2="329.5" y2="275.8" stroke="#1a1a1a" stroke-width="1"/>
<line x1="329.5" y1="295" x2="329.5" y2="297" stroke="#1a1a1a" stroke-width="1"/>
<line x1="337.5" y1="272" x2="337.5" y2="275.8" stroke="#1a1a1a" stroke-width="1"/>
<line x1="337.5" y1="295" x2="337.5" y2="297" stroke="#1a1a1a" stroke-width="1"/>
<line x1="346.5" y1="272" x2="346.5" y2="275.8" stroke="#1a1a1a" stroke-width="1"/>
<line x1="346.5" y1="295" x2="346.5" y2="297" stroke="#1a1a1a" stroke-width="1"/>
<line x1="354.5" y1="272" x2="354.5" y2="275.8" stroke="#1a1a1a" stroke-width="1"/>
<line x1="354.5" y1="295" x2="354.5" y2="297" stroke="#1a1a1a" stroke-width="1"/>
<line x1="362.5" y1="272" x2="362.5" y2="277" stroke="#1a1a1a" stroke-width="1"/>
<line x1="362.5" y1="293.5" x2="362.5" y2="297" stroke="#1a1a1a" stroke-width="1"/>
<line x1="371.5" y1="272" x2="371.5" y2="275.8" stroke="#1a1a1a" stroke-width="1"/>
<line x1="371.5" y1="295" x2="371.5" y2="297" stroke="#1a1a1a" stroke-width="1"/>
<line x1="379.5" y1="272" x2="379.5" y2="275.8" stroke="#1a1a1a" stroke-width="1"/>
<line x1="379.5" y1="295" x2="379.5" y2="297" stroke="#1a1a1a" stroke-width="1"/>
<line x1="388.5" y1="272" x2="388.5" y2="275.8" stroke="#1a1a1a" stroke-width="1"/>
<line x1="388.5" y1="295" x2="388.5" y2="297" stroke="#1a1a1a" stroke-width="1"/>
<line x1="396.5" y1="272" x2="396.5" y2="275.8" stroke="#1a1a1a" stroke-width="1"/>
<line x1="396.5" y1="295" x2="396.5" y2="297" stroke="#1a1a1a" stroke-width="1"/>
<line x1="405.5" y1="272" x2="405.5" y2="277" stroke="#1a1a1a" stroke-width="1"/>
<line x1="405.5" y1="293.5" x2="405.5" y2="297" stroke="#1a1a1a" stroke-width="1"/>
<line x1="414.5" y1="272" x2="414.5" y2="275.8" stroke="#1a1a1a" stroke-width="1"/>
<line x1="414.5" y1="295" x2="414.5" y2="297" stroke="#1a1a1a" stroke-width="1"/>
<line x1="422.5" y1="272" x2="422.5" y2="275.8" stroke="#1a1a1a" stroke-width="1"/>
<line x1="422.5" y1="295" x2="422.5" y2="297" stroke="#1a1a1a" stroke-width="1"/>
<line x1="431.5" y1="272" x2="431.5" y2="275.8" stroke="#1a1a1a" stroke-width="1"/>
<line x1="431.5" y1="295" x2="431.5" y2="297" stroke="#1a1a1a" stroke-width="1"/>
<line x1="439.5" y1="272" x2="439.5" y2="275.8" stroke="#1a1a1a" stroke-width="1"/>
<line x1="439.5" y1="295" x2="439.5" y2="297" stroke="#1a1a1a" stroke-width="1"/>
<line x1="448.5" y1="272" x2="448.5" y2="277" stroke="#1a1a1a" stroke-width="1"/>
<line x1="448.5" y1="293.5" x2="448.5" y2="297" stroke="#1a1a1a" stroke-width="1"/>
<line x1="456.5" y1="272" x2="456.5" y2="275.8" stroke="#1a1a1a" stroke-width="1"/>
<line x1="456.5" y1="295" x2="456.5" y2="297" stroke="#1a1a1a" stroke-width="1"/>
<line x1="465.5" y1="272" x2="465.5" y2="275.8" stroke="#1a1a1a" stroke-width="1"/>
<line x1="465.5" y1="295" x2="465.5" y2="297" stroke="#1a1a1a" stroke-width="1"/>
<line x1="473.5" y1="272" x2="473.5" y2="275.8" stroke="#1a1a1a" stroke-width="1"/>
<line x1="473.5" y1="295" x2="473.5" y2="297" stroke="#1a1a1a" stroke-width="1"/>
<line x1="482.5" y1="272" x2="482.5" y2="275.8" stroke="#1a1a1a" stroke-width="1"/>
<line x1="482.5" y1="295" x2="482.5" y2="297" stroke="#1a1a1a" stroke-width="1"/>
<line x1="490.5" y1="272" x2="490.5" y2="277" stroke="#1a1a1a" stroke-width="1"/>
<line x1="490.5" y1="293.5" x2="490.5" y2="297" stroke="#1a1a1a" stroke-width="1"/>
<line x1="499.5" y1="272" x2="499.5" y2="275.8" stroke="#1a1a1a" stroke-width="1"/>
<line x1="499.5" y1="295" x2="499.5" y2="297" stroke="#1a1a1a" stroke-width="1"/>
<line x1="507.5" y1="272" x2="507.5" y2="275.8" stroke="#1a1a1a" stroke-width="1"/>
<line x1="507.5" y1="295" x2="507.5" y2="297" stroke="#1a1a1a" stroke-width="1"/>
<line x1="516.5" y1="272" x2="516.5" y2="275.8" stroke="#1a1a1a" stroke-width="1"/>
<line x1="516.5" y1="295" x2="516.5" y2="297" stroke="#1a1a1a" stroke-width="1"/>
<line x1="524.5" y1="272" x2="524.5" y2="275.8" stroke="#1a1a1a" stroke-width="1"/>
<line x1="524.5" y1="295" x2="524.5" y2="297" stroke="#1a1a1a" stroke-width="1"/>
<line x1="533.5" y1="272" x2="533.5" y2="277" stroke="#1a1a1a" stroke-width="1"/>
<line x1="533.5" y1="293.5" x2="533.5" y2="297" stroke="#1a1a1a" stroke-width="1"/>
<line x1="541.5" y1="272" x2="541.5" y2="275.8" stroke="#1a1a1a" stroke-width="1"/>
<line x1="541.5" y1="295" x2="541.5" y2="297" stroke="#1a1a1a" stroke-width="1"/>
<line x1="550.5" y1="272" x2="550.5" y2="275.8" stroke="#1a1a1a" stroke-width="1"/>
<line x1="550.5" y1="295" x2="550.5" y2="297" stroke="#1a1a1a" stroke-width="1"/>
<line x1="558.5" y1="272" x2="558.5" y2="275.8" stroke="#1a1a1a" stroke-width="1"/>
<line x1="558.5" y1="295" x2="558.5" y2="297" stroke="#1a1a1a" stroke-width="1"/>
<line x1="567.5" y1="272" x2="567.5" y2="275.8" stroke="#1a1a1a" stroke-width="1"/>
<line x1="567.5" y1="295" x2="567.5" y2="297" stroke="#1a1a1a" stroke-width="1"/>
<line x1="575.5" y1="272" x2="575.5" y2="277" stroke="#1a1a1a" stroke-width="1"/>
<line x1="575.5" y1="293.5" x2="575.5" y2="297" stroke="#1a1a1a" stroke-width="1"/>
<line x1="583.5" y1="272" x2="583.5" y2="275.8" stroke="#1a1a1a" stroke-width="1"/>
<line x1="583.5" y1="295" x2="583.5" y2="297" stroke="#1a1a1a" stroke-width="1"/>
<line x1="592.5" y1="272" x2="592.5" y2="275.8" stroke="#1a1a1a" stroke-width="1"/>
<line x1="592.5" y1="295" x2="592.5" y2="297" stroke="#1a1a1a" stroke-width="1"/>
<line x1="600.5" y1="272" x2="600.5" y2="275.8" stroke="#1a1a1a" stroke-width="1"/>
<line x1="600.5" y1="295" x2="600.5" y2="297" stroke="#1a1a1a" stroke-width="1"/>
<line x1="609.5" y1="272" x2="609.5" y2="275.8" stroke="#1a1a1a" stroke-width="1"/>
<line x1="609.5" y1="295" x2="609.5" y2="297" stroke="#1a1a1a" stroke-width="1"/>
<line x1="617.5" y1="272" x2="617.5" y2="277" stroke="#1a1a1a" stroke-width="1"/>
<line x1="617.5" y1="293.5" x2="617.5" y2="297" stroke="#1a1a1a" stroke-width="1"/>
<line x1="625.5" y1="272" x2="625.5" y2="275.8" stroke="#1a1a1a" stroke-width="1"/>
<line x1="625.5" y1="295" x2="625.5" y2="297" stroke="#1a1a1a" stroke-width="1"/>
<line x1="634.5" y1="272" x2="634.5" y2="275.8" stroke="#1a1a1a" stroke-width="1"/>
<line x1="634.5" y1="295" x2="634.5" y2="297" stroke="#1a1a1a" stroke-width="1"/>
<line x1="642.5" y1="272" x2="642.5" y2="275.8" stroke="#1a1a1a" stroke-width="1"/>
<line x1="642.5" y1="295" x2="642.5" y2="297" stroke="#1a1a1a" stroke-width="1"/>
<line x1="651.5" y1="272" x2="651.5" y2="275.8" stroke="#1a1a1a" stroke-width="1"/>
<line x1="651.5" y1="295" x2="651.5" y2="297" stroke="#1a1a1a" stroke-width="1"/>
<line x1="659.5" y1="272" x2="659.5" y2="277" stroke="#1a1a1a" stroke-width="1"/>
<line x1="659.5" y1="293.5" x2="659.5" y2="297" stroke="#1a1a1a" stroke-width="1"/>
<line x1="667.5" y1="272" x2="667.5" y2="275.8" stroke="#1a1a1a" stroke-width="1"/>
<line x1="667.5" y1="295" x2="667.5" y2="297" stroke="#1a1a1a" stroke-width="1"/>
<line x1="676.5" y1="272" x2="676.5" y2="275.8" stroke="#1a1a1a" stroke-width="1"/>
<line x1="676.5" y1="295" x2="676.5" y2="297" stroke="#1a1a1a" stroke-width="1"/>
<line x1="684.5" y1="272" x2="684.5" y2="275.8" stroke="#1a1a1a" stroke-width="1"/>
<line x1="684.5" y1="295" x2="684.5" y2="297" stroke="#1a1a1a" stroke-width="1"/>
<line x1="693.5" y1="272" x2="693.5" y2="275.8" stroke="#1a1a1a" stroke-width="1"/>
<line x1="693.5" y1="295" x2="693.5" y2="297" stroke="#1a1a1a" stroke-width="1"/>
<line x1="701.5" y1="272" x2="701.5" y2="277" stroke="#1a1a1a" stroke-width="1"/>
<line x1="701.5" y1="293.5" x2="701.5" y2="297" stroke="#1a1a1a" stroke-width="1"/>
<line x1="710.5" y1="272" x2="710.5" y2="275.8" stroke="#1a1a1a" stroke-width="1"/>
<line x1="710.5" y1="295" x2="710.5" y2="297" stroke="#1a1a1a" stroke-width="1"/>
<line x1="718.5" y1="272" x2="718.5" y2="275.8" stroke="#1a1a1a" stroke-width="1"/>
<line x1="718.5" y1="295" x2="718.5" y2="297" stroke="#1a1a1a" stroke-width="1"/>
<line x1="727.5" y1="272" x2="727.5" y2="275.8" stroke="#1a1a1a" stroke-width="1"/>
<line x1="727.5" y1="295" x2="727.5" y2="297" stroke="#1a1a1a" stroke-width="1"/>
<line x1="735.5" y1="272" x2="735.5" y2="275.8" stroke="#1a1a1a" stroke-width="1"/>
<line x1="735.5" y1="295" x2="735.5" y2="297" stroke="#1a1a1a" stroke-width="1"/>
<line x1="744.5" y1="272" x2="744.5" y2="277" stroke="#1a1a1a" stroke-width="1"/>
<line x1="744.5" y1="293.5" x2="744.5" y2="297" stroke="#1a1a1a" stroke-width="1"/>
<line x1="753.5" y1="272" x2="753.5" y2="275.8" stroke="#1a1a1a" stroke-width="1"/>
<line x1="753.5" y1="295" x2="753.5" y2="297" stroke="#1a1a1a" stroke-width="1"/>
<line x1="761.5" y1="272" x2="761.5" y2="275.8" stroke="#1a1a1a" stroke-width="1"/>
<line x1="761.5" y1="295" x2="761.5" y2="297" stroke="#1a1a1a" stroke-width="1"/>
<line x1="770.5" y1="272" x2="770.5" y2="275.8" stroke="#1a1a1a" stroke-width="1"/>
<line x1="770.5" y1="295" x2="770.5" y2="297" stroke="#1a1a1a" stroke-width="1"/>
<line x1="778.5" y1="272" x2="778.5" y2="275.8" stroke="#1a1a1a" stroke-width="1"/>
<line x1="778.5" y1="295" x2="778.5" y2="297" stroke="#1a1a1a" stroke-width="1"/>
<line x1="787.5" y1="272" x2="787.5" y2="277" stroke="#1a1a1a" stroke-width="1"/>
<line x1="787.5" y1="293.5" x2="787.5" y2="297" stroke="#1a1a1a" stroke-width="1"/>
<line x1="795.5" y1="272" x2="795.5" y2="275.8" stroke="#1a1a1a" stroke-width="1"/>
<line x1="795.5" y1="295" x2="795.5" y2="297" stroke="#1a1a1a" stroke-width="1"/>
<line x1="804.5" y1="272" x2="804.5" y2="275.8" stroke="#1a1a1a" stroke-width="1"/>
<line x1="804.5" y1="295" x2="804.5" y2="297" stroke="#1a1a1a" stroke-width="1"/>
<line x1="812.5" y1="272" x2="812.5" y2="275.8" stroke="#1a1a1a" stroke-width="1"/>
<line x1="812.5" y1="295" x2="812.5" y2="297" stroke="#1a1a1a" stroke-width="1"/>
<line x1="821.5" y1="272" x2="821.5" y2="275.8" stroke="#1a1a1a" stroke-width="1"/>
<line x1="821.5" y1="295" x2="821.5" y2="297" stroke="#1a1a1a" stroke-width="1"/>
<line x1="829.5" y1="272" x2="829.5" y2="277" stroke="#1a1a1a" stroke-width="1"/>
<line x1="829.5" y1="293.5" x2="829.5" y2="297" stroke="#1a1a1a" stroke-width="1"/>
<line x1="837.5" y1="272" x2="837.5" y2="275.8" stroke="#1a1a1a" stroke-width="1"/>
<line x1="837.5" y1="295" x2="837.5" y2="297" stroke="#1a1a1a" stroke-width="1"/>
<line x1="846.5" y1="272" x2="846.5" y2="275.8" stroke="#1a1a1a" stroke-width="1"/>
<line x1="846.5" y1="295" x2="846.5" y2="297" stroke="#1a1a1a" stroke-width="1"/>
<line x1="854.5" y1="272" x2="854.5" y2="275.8" stroke="#1a1a1a" stroke-width="1"/>
<line x1="854.5" y1="295" x2="854.5" y2="297" stroke="#1a1a1a" stroke-width="1"/>
<line x1="863.5" y1="272" x2="863.5" y2="275.8" stroke="#1a1a1a" stroke-width="1"/>
<line x1="863.5" y1="295" x2="863.5" y2="297" stroke="#1a1a1a" stroke-width="1"/>
<text x="205.0" y="290" text-anchor="middle" font-size="12.3" fill="#000" font-family="Liberation Sans">0°</text>
<text x="241.0" y="290" text-anchor="middle" font-size="12.3" fill="#000" font-family="Liberation Sans">45°</text>
<text x="282.0" y="290" text-anchor="middle" font-size="12.3" fill="#000" font-family="Liberation Sans">90°</text>
<text x="324.0" y="290" text-anchor="middle" font-size="12.3" fill="#000" font-family="Liberation Sans">135°</text>
<text x="365.0" y="290" text-anchor="middle" font-size="12.3" fill="#000" font-family="Liberation Sans">180°</text>
<text x="408.0" y="290" text-anchor="middle" font-size="12.3" fill="#000" font-family="Liberation Sans">225°</text>
<text x="451.0" y="290" text-anchor="middle" font-size="12.3" fill="#000" font-family="Liberation Sans">270°</text>
<text x="493.0" y="290" text-anchor="middle" font-size="12.3" fill="#000" font-family="Liberation Sans">315°</text>
<text x="536.0" y="290" text-anchor="middle" font-size="12.3" fill="#000" font-family="Liberation Sans">360°</text>
<text x="578.0" y="290" text-anchor="middle" font-size="12.3" fill="#000" font-family="Liberation Sans">405°</text>
<text x="620.0" y="290" text-anchor="middle" font-size="12.3" fill="#000" font-family="Liberation Sans">450°</text>
<text x="662.0" y="290" text-anchor="middle" font-size="12.3" fill="#000" font-family="Liberation Sans">495°</text>
<text x="704.0" y="290" text-anchor="middle" font-size="12.3" fill="#000" font-family="Liberation Sans">540°</text>
<text x="747.0" y="290" text-anchor="middle" font-size="12.3" fill="#000" font-family="Liberation Sans">585°</text>
<text x="790.0" y="290" text-anchor="middle" font-size="12.3" fill="#000" font-family="Liberation Sans">630°</text>
<text x="832.0" y="290" text-anchor="middle" font-size="12.3" fill="#000" font-family="Liberation Sans">675°</text>
<rect x="136" y="132" width="64" height="18" fill="#FFFFFF"/>
<text x="168.0" y="145" text-anchor="middle" font-size="11" fill="#C0262E" font-family="Liberation Sans">(13°) 2.67 В</text>
<circle cx="209.2" cy="152.8" r="3.7" fill="#fff"/>
<rect x="306" y="158" width="64" height="18" fill="#FFFFFF"/>
<text x="338.0" y="171" text-anchor="middle" font-size="11" fill="#C0262E" font-family="Liberation Sans">(18°) 2.24 В</text>
<circle cx="379" cy="179" r="3.7" fill="#fff"/>
<rect x="471" y="123" width="64" height="18" fill="#FFFFFF"/>
<text x="503.0" y="136" text-anchor="middle" font-size="11" fill="#C0262E" font-family="Liberation Sans">(12°) 2.84 В</text>
<circle cx="544" cy="144" r="3.7" fill="#fff"/>
<rect x="641" y="133" width="64" height="18" fill="#FFFFFF"/>
<text x="673.0" y="146" text-anchor="middle" font-size="11" fill="#C0262E" font-family="Liberation Sans">(14°) 2.66 В</text>
<circle cx="714" cy="154.2" r="3.7" fill="#fff"/>
<rect x="210" y="377" width="73" height="18" fill="#FFFFFF"/>
<text x="246.5" y="390" text-anchor="middle" font-size="11" fill="#C0262E" font-family="Liberation Sans">(-77°) -1.46 В</text>
<circle cx="291" cy="397.6" r="3.7" fill="#fff"/>
<rect x="413" y="374" width="72" height="18" fill="#FFFFFF"/>
<text x="449.0" y="387" text-anchor="middle" font-size="11" fill="#C0262E" font-family="Liberation Sans">(-41°) -1.41 В</text>
<circle cx="494" cy="394.5" r="3.7" fill="#fff"/>
<rect x="578" y="374" width="72" height="18" fill="#FFFFFF"/>
<text x="614.0" y="387" text-anchor="middle" font-size="11" fill="#C0262E" font-family="Liberation Sans">(-45°) -1.42 В</text>
<circle cx="658.8" cy="394.8" r="3.7" fill="#fff"/>
<rect x="749" y="380" width="71" height="18" fill="#FFFFFF"/>
<text x="784.5" y="393" text-anchor="middle" font-size="11" fill="#C0262E" font-family="Liberation Sans">(-44°) -1.51 В</text>
<circle cx="830" cy="400.7" r="3.7" fill="#fff"/>
<rect x="386" y="400" width="179.5" height="21" fill="#D2F6D2"/>
<rect x="386" y="400" width="16.5" height="21" fill="#E2C8EC"/>
<rect x="444.5" y="400" width="17" height="21" fill="#C8D0F6"/>
<rect x="503.5" y="400" width="17" height="21" fill="#C8C8C8"/>
<path d="M388.5,404.5 h11 l-4.5,5 v9 h-2 v-9z" fill="#800080"/>
<path d="M447,404.5 h11 l-4.5,5 v9 h-2 v-9z" fill="#0000E0"/>
<path d="M512,406 l5,9 h-10z" fill="none" stroke="#000" stroke-width="1.2"/>
<text x="403.5" y="416" font-size="16" fill="#602060" font-family="Liberation Sans">353°</text>
<text x="462.5" y="416" font-size="16" fill="#1A30C0" font-family="Liberation Sans">862°</text>
<text x="521" y="416" font-size="16" fill="#103010" font-family="Liberation Sans">509°</text>
<path d="M519,73.5 h15 l-5,6 h-5z" fill="#8A2A9A"/><text x="526.5" y="80" text-anchor="middle" font-size="7" font-weight="bold" fill="#fff" font-family="Liberation Sans">1</text>
<path d="M999,74 h16 l-5.5,7 h-5z" fill="#1A28D0"/><text x="1007" y="80.5" text-anchor="middle" font-size="7" font-weight="bold" fill="#fff" font-family="Liberation Sans">2</text>
<path d="M1016.5,84 l4.5,6 h-9z" fill="#FF1010"/>
<path d="M1012,534 h9 l-4.5,5.5z" fill="#FF1010"/>
<path d="M1016,307 l4,4 l-4,4 l-4,-4z" fill="#FF1010"/>
<circle cx="37.5" cy="311" r="4.5" fill="#FF1A1A"/>
</svg>
<!-- Bottom scroll row -->
<div class="a" style="left:29px;top:613px;width:995px;height:17px;background:#ECE9D8"></div>
<div class="a" style="left:258px;top:613px;width:506px;height:16px;background:#F5F4EF;background-image:radial-gradient(#E4E2D6 0.6px,transparent 0.7px);background-size:2px 2px"></div>
<div class="btn" style="left:30px;top:613px;width:17px;height:16px"></div>
<svg class="a" style="left:31px;top:614px" width="15" height="15"><circle cx="7.5" cy="7.5" r="6" fill="#E8E8F0" stroke="#000" stroke-width="1"/><path d="M4,7.5 h7" stroke="#1020A0" stroke-width="2"/></svg>
<div class="a" style="left:47px;top:613px;width:68px;height:16px;background:#fff"></div>
<div class="t" style="left:49px;top:615px;font-size:12px">187.7 мс</div>
<div class="a" style="left:102px;top:620px;width:0;height:0;border-left:4px solid transparent;border-right:4px solid transparent;border-top:4px solid #000"></div>
<div class="btn" style="left:115px;top:613px;width:17px;height:16px"></div>
<svg class="a" style="left:116px;top:614px" width="15" height="15"><circle cx="7.5" cy="7.5" r="6" fill="#F4E8E8" stroke="#000" stroke-width="1"/><path d="M4,7.5 h7 M7.5,4 v7" stroke="#D01010" stroke-width="2"/></svg>
<div class="a" style="left:132px;top:613px;width:64px;height:16px;background:#fff"></div>
<div class="t" style="left:134px;top:615px;font-size:12px">30</div>
<div class="a" style="left:182px;top:620px;width:0;height:0;border-left:4px solid transparent;border-right:4px solid transparent;border-top:4px solid #000"></div>
<div class="btn" style="left:196px;top:613px;width:24px;height:16px"><div class="a" style="left:7px;top:3px;width:2px;height:8px;background:#000"></div><div class="a" style="left:9px;top:3px;border-top:4px solid transparent;border-bottom:4px solid transparent;border-right:7px solid #000"></div></div>
<div class="btn" style="left:221px;top:613px;width:17px;height:16px"><div class="a" style="left:5px;top:3px;border-top:4px solid transparent;border-bottom:4px solid transparent;border-right:5px solid #000"></div></div>
<div class="btn" style="left:241px;top:613px;width:17px;height:16px"></div>

<div class="btn" style="left:764px;top:613px;width:17px;height:16px"><div class="a" style="left:6px;top:3px;border-top:4px solid transparent;border-bottom:4px solid transparent;border-left:5px solid #000"></div></div>
<div class="btn" style="left:782px;top:613px;width:23px;height:16px"><div class="a" style="left:7px;top:3px;border-top:4px solid transparent;border-bottom:4px solid transparent;border-left:7px solid #000"></div><div class="a" style="left:14px;top:3px;width:2px;height:8px;background:#000"></div></div>
<div class="btn" style="left:805px;top:613px;width:18px;height:16px"></div>
<svg class="a" style="left:806px;top:614px" width="15" height="15"><circle cx="7.5" cy="7" r="5.5" fill="#F0F0E8" stroke="#000" stroke-width="1"/><path d="M4.5,7 h6 M7.5,4 v6" stroke="#10A020" stroke-width="2"/></svg>
<div class="btn" style="left:823px;top:613px;width:23px;height:16px"><div class="a" style="left:7px;top:3px;width:2px;height:8px;background:#000"></div><div class="a" style="left:9px;top:3px;border-top:4px solid transparent;border-bottom:4px solid transparent;border-right:7px solid #000"></div></div>
<div class="btn" style="left:846px;top:613px;width:23px;height:16px"><div class="a" style="left:8px;top:3px;border-top:4px solid transparent;border-bottom:4px solid transparent;border-right:7px solid #000"></div></div>
<div class="t" style="left:895px;top:615px;font-size:12px">1</div>
<div class="btn" style="left:927px;top:613px;width:23px;height:16px"><div class="a" style="left:8px;top:3px;border-top:4px solid transparent;border-bottom:4px solid transparent;border-left:7px solid #000"></div></div>
<div class="btn" style="left:951px;top:613px;width:23px;height:16px"><div class="a" style="left:7px;top:3px;border-top:4px solid transparent;border-bottom:4px solid transparent;border-left:7px solid #000"></div><div class="a" style="left:14px;top:3px;width:2px;height:8px;background:#000"></div></div>
<div class="btn" style="left:975px;top:613px;width:23px;height:16px"><div class="a" style="left:8px;top:3px;border-top:4px solid transparent;border-bottom:4px solid transparent;border-left:7px solid #108010"></div></div>
<div class="btn" style="left:999px;top:613px;width:23px;height:16px;border-left:1px solid #4060C0"><div class="a" style="left:8px;top:3px;border-top:4px solid transparent;border-bottom:4px solid transparent;border-left:7px solid #1010E0"></div></div>

<!-- splitter -->
<div class="a" style="left:308px;top:630px;width:407px;height:7px;background:#F0EFE8;border:1px solid #B0AE9E;border-radius:1px"></div>
<div class="a" style="left:323px;top:633px;width:376px;height:1px;border-top:1px dotted #505060"></div>
<div class="a" style="left:313px;top:632px;border-left:3.5px solid transparent;border-right:3.5px solid transparent;border-top:3.5px solid #3A3A6A"></div>
<div class="a" style="left:705.5px;top:632px;border-left:3.5px solid transparent;border-right:3.5px solid transparent;border-top:3.5px solid #3A3A6A"></div>

<!-- group boxes -->
<div class="grp" style="left:172px;top:646px;width:303px;height:70px"></div>
<div class="grp" style="left:479px;top:646px;width:105px;height:71px"></div>
<div class="grp" style="left:590px;top:647px;width:124px;height:70px"></div>
<div class="grp" style="left:720px;top:645px;width:133px;height:72px"></div>

<!-- channel buttons -->
<div class="chb" style="left:177px;width:25px">1</div>
<div class="chb red" style="left:205px;width:46px">2</div>
<div class="chb" style="left:254px;width:24px">3</div>
<div class="chb blue" style="left:280px;width:25px">4</div>
<div class="chb" style="left:307px;width:25px">5</div>
<div class="chb" style="left:334px;width:25px">6</div>
<div class="chb" style="left:362px;width:25px">D</div>

<div class="a" style="left:179px;top:666px;width:177px;height:21px;background:#fff;border:1px solid #C43030"></div>
<div class="t" style="left:183px;top:671px;font-size:11.2px">Датчик разряжения</div>
<div class="btn" style="left:336px;top:668px;width:17px;height:17px"><div class="t" style="left:3px;top:1px;font-size:11px;font-weight:bold">···</div></div>
<svg class="a" style="left:359px;top:667px" width="22" height="20"><rect x="4.5" y="1.5" width="12" height="11" fill="#fff" stroke="#203040"/><rect x="5" y="9" width="11" height="3" fill="#4A8A60"/><path d="M8,6 l3,-3" stroke="#000"/><path d="M3,14 q0,4 5,4" fill="none" stroke="#1A30B0" stroke-width="1.3"/><path d="M6,16 l2,2 l-2,2" fill="none" stroke="#1A30B0" stroke-width="1.2"/><path d="M19,14 q0,4 -5,4" fill="none" stroke="#E02020" stroke-width="1.3"/><path d="M16,16 l-2,2 l2,2" fill="none" stroke="#E02020" stroke-width="1.2"/></svg>

<div class="a" style="left:180px;top:688px;width:25px;height:24px;background:#F4F3EE;border:1px solid #E0DDD0"></div>
<svg class="a" style="left:183px;top:692px" width="20" height="16"><path d="M3,9 q7,-7 14,0 q-7,5 -14,0z" fill="#404040"/><circle cx="10" cy="9" r="2.5" fill="#000"/></svg>
<div class="a" style="left:206px;top:688px;width:24px;height:24px;background:#F4F3EE;border:1px solid #E0DDD0"></div>
<svg class="a" style="left:207px;top:690px" width="22" height="20"><path d="M2,5 l2,-2 l2,2 l2,-2 l2,2 l2,-2 l2,2 l2,-2 l2,2 l2,-2" fill="none" stroke="#800080" stroke-width="1.3"/><path d="M2,16 l2,-2 l2,2 l2,-2 l2,2 l2,-2 l2,2 l2,-2 l2,2 l2,-2" fill="none" stroke="#800080" stroke-width="1.3"/><path d="M8,8 h6 l-3,3z" fill="#000"/><path d="M2,11 h18" stroke="#000" stroke-width="0.6" stroke-dasharray="1 1"/></svg>
<svg class="a" style="left:232px;top:689px" width="20" height="23"><path d="M10,1 l7,7 h-4 v7 h4 l-7,7 l-7,-7 h4 v-7 h-4z" fill="#1A30D0"/><path d="M10,1 l7,7 h-4 v4 h-6 v-4 h-4z" fill="#8A1AA0"/></svg>
<div class="a" style="left:255px;top:688px;width:25px;height:24px;background:#F4F3EE;border:1px solid #E0DDD0"></div>
<svg class="a" style="left:258px;top:692px" width="20" height="16"><path d="M1,2.5 h18 M1,13.5 h18" stroke="#000" stroke-width="1.2"/><path d="M1,8 h18" stroke="#000" stroke-width="1" stroke-dasharray="2 1"/></svg>
<div class="t" style="left:286px;top:693px;font-size:12px;font-weight:bold;font-style:italic;font-family:'Liberation Serif',serif">f<span style="font-size:9px">x</span></div>

<svg class="a" style="left:370px;top:645px" width="220" height="75" viewBox="370 645 220 75">
<line x1="411.0" y1="702.0" x2="408.4" y2="704.4" stroke="#B4B2A6" stroke-width="1"/>
<line x1="409.4" y1="700.0" x2="406.5" y2="701.9" stroke="#B4B2A6" stroke-width="1"/>
<line x1="408.0" y1="697.7" x2="404.9" y2="699.2" stroke="#B4B2A6" stroke-width="1"/>
<line x1="407.0" y1="695.2" x2="403.7" y2="696.3" stroke="#B4B2A6" stroke-width="1"/>
<line x1="406.3" y1="692.6" x2="402.9" y2="693.3" stroke="#B4B2A6" stroke-width="1"/>
<line x1="406.0" y1="690.0" x2="402.5" y2="690.2" stroke="#B4B2A6" stroke-width="1"/>
<line x1="406.1" y1="687.3" x2="402.6" y2="687.0" stroke="#B4B2A6" stroke-width="1"/>
<line x1="406.5" y1="684.7" x2="403.1" y2="683.9" stroke="#B4B2A6" stroke-width="1"/>
<line x1="407.2" y1="682.1" x2="404.0" y2="680.9" stroke="#B4B2A6" stroke-width="1"/>
<line x1="408.3" y1="679.7" x2="405.3" y2="678.1" stroke="#B4B2A6" stroke-width="1"/>
<line x1="409.8" y1="677.5" x2="406.9" y2="675.4" stroke="#B4B2A6" stroke-width="1"/>
<line x1="411.5" y1="675.4" x2="409.0" y2="673.0" stroke="#B4B2A6" stroke-width="1"/>
<line x1="413.5" y1="673.7" x2="411.3" y2="670.9" stroke="#B4B2A6" stroke-width="1"/>
<line x1="415.7" y1="672.2" x2="413.9" y2="669.1" stroke="#B4B2A6" stroke-width="1"/>
<line x1="418.0" y1="671.0" x2="416.7" y2="667.7" stroke="#B4B2A6" stroke-width="1"/>
<line x1="420.6" y1="670.1" x2="419.7" y2="666.7" stroke="#B4B2A6" stroke-width="1"/>
<line x1="423.2" y1="669.6" x2="422.8" y2="666.2" stroke="#B4B2A6" stroke-width="1"/>
<line x1="425.8" y1="669.5" x2="425.9" y2="666.0" stroke="#B4B2A6" stroke-width="1"/>
<line x1="428.5" y1="669.7" x2="429.0" y2="666.3" stroke="#B4B2A6" stroke-width="1"/>
<line x1="431.1" y1="670.3" x2="432.1" y2="667.0" stroke="#B4B2A6" stroke-width="1"/>
<line x1="433.6" y1="671.3" x2="435.0" y2="668.1" stroke="#B4B2A6" stroke-width="1"/>
<line x1="435.9" y1="672.5" x2="437.8" y2="669.6" stroke="#B4B2A6" stroke-width="1"/>
<line x1="438.1" y1="674.1" x2="440.3" y2="671.4" stroke="#B4B2A6" stroke-width="1"/>
<line x1="440.0" y1="675.9" x2="442.6" y2="673.6" stroke="#B4B2A6" stroke-width="1"/>
<line x1="441.6" y1="678.0" x2="444.5" y2="676.1" stroke="#B4B2A6" stroke-width="1"/>
<line x1="443.0" y1="680.3" x2="446.1" y2="678.8" stroke="#B4B2A6" stroke-width="1"/>
<line x1="444.0" y1="682.8" x2="447.3" y2="681.7" stroke="#B4B2A6" stroke-width="1"/>
<line x1="444.7" y1="685.4" x2="448.1" y2="684.7" stroke="#B4B2A6" stroke-width="1"/>
<line x1="445.0" y1="688.0" x2="448.5" y2="687.8" stroke="#B4B2A6" stroke-width="1"/>
<line x1="444.9" y1="690.7" x2="448.4" y2="691.0" stroke="#B4B2A6" stroke-width="1"/>
<line x1="444.5" y1="693.3" x2="447.9" y2="694.1" stroke="#B4B2A6" stroke-width="1"/>
<line x1="443.8" y1="695.8" x2="447.0" y2="697.1" stroke="#B4B2A6" stroke-width="1"/>
<line x1="442.7" y1="698.3" x2="445.7" y2="699.9" stroke="#B4B2A6" stroke-width="1"/>
<line x1="441.2" y1="700.5" x2="444.1" y2="702.6" stroke="#B4B2A6" stroke-width="1"/>
<line x1="439.5" y1="702.5" x2="442.0" y2="705.0" stroke="#B4B2A6" stroke-width="1"/>
<line x1="410.6" y1="702.4" x2="406.5" y2="706.1" stroke="#000" stroke-width="1.1"/>
<line x1="405.6" y1="686.9" x2="400.1" y2="686.3" stroke="#000" stroke-width="1.1"/>
<line x1="413.5" y1="673.0" x2="410.2" y2="668.6" stroke="#000" stroke-width="1.1"/>
<line x1="432.0" y1="670.1" x2="433.8" y2="664.9" stroke="#000" stroke-width="1.1"/>
<line x1="445.0" y1="684.5" x2="450.3" y2="683.3" stroke="#000" stroke-width="1.1"/>
<line x1="439.9" y1="702.9" x2="443.8" y2="706.7" stroke="#000" stroke-width="1.1"/>
<circle cx="425.5" cy="689" r="16.5" fill="#EDECE5"/>
<path d="M442.00,689.00 A16.5,16.5 0 0 0 441.72,685.99" fill="none" stroke="rgb(25,25,21)" stroke-width="4.00"/>
<path d="M441.75,686.13 A16.5,16.5 0 0 0 440.96,683.22" fill="none" stroke="rgb(25,25,21)" stroke-width="4.00"/>
<path d="M441.00,683.36 A16.5,16.5 0 0 0 439.72,680.63" fill="none" stroke="rgb(25,25,21)" stroke-width="4.00"/>
<path d="M439.79,680.75 A16.5,16.5 0 0 0 438.05,678.28" fill="none" stroke="rgb(36,36,32)" stroke-width="3.85"/>
<path d="M438.14,678.39 A16.5,16.5 0 0 0 436.00,676.27" fill="none" stroke="rgb(63,63,59)" stroke-width="3.50"/>
<path d="M436.11,676.36 A16.5,16.5 0 0 0 433.62,674.64" fill="none" stroke="rgb(89,89,85)" stroke-width="3.15"/>
<path d="M433.75,674.71 A16.5,16.5 0 0 0 431.01,673.45" fill="none" stroke="rgb(114,114,110)" stroke-width="2.82"/>
<path d="M431.14,673.50 A16.5,16.5 0 0 0 428.22,672.73" fill="none" stroke="rgb(139,139,135)" stroke-width="2.50"/>
<path d="M428.37,672.75 A16.5,16.5 0 0 0 425.36,672.50" fill="none" stroke="rgb(160,160,156)" stroke-width="2.21"/>
<path d="M425.50,672.50 A16.5,16.5 0 0 0 422.49,672.78" fill="none" stroke="rgb(179,179,175)" stroke-width="1.97"/>
<path d="M422.63,672.75 A16.5,16.5 0 0 0 419.72,673.54" fill="none" stroke="rgb(194,194,190)" stroke-width="1.77"/>
<path d="M419.86,673.50 A16.5,16.5 0 0 0 417.13,674.78" fill="none" stroke="rgb(205,205,201)" stroke-width="1.62"/>
<path d="M417.25,674.71 A16.5,16.5 0 0 0 414.78,676.45" fill="none" stroke="rgb(212,212,208)" stroke-width="1.53"/>
<path d="M414.89,676.36 A16.5,16.5 0 0 0 412.77,678.50" fill="none" stroke="rgb(215,215,211)" stroke-width="1.50"/>
<path d="M412.86,678.39 A16.5,16.5 0 0 0 411.14,680.88" fill="none" stroke="rgb(212,212,208)" stroke-width="1.53"/>
<path d="M411.21,680.75 A16.5,16.5 0 0 0 409.95,683.49" fill="none" stroke="rgb(205,205,201)" stroke-width="1.62"/>
<path d="M410.00,683.36 A16.5,16.5 0 0 0 409.23,686.28" fill="none" stroke="rgb(194,194,190)" stroke-width="1.77"/>
<path d="M409.25,686.13 A16.5,16.5 0 0 0 409.00,689.14" fill="none" stroke="rgb(179,179,175)" stroke-width="1.97"/>
<path d="M409.00,689.00 A16.5,16.5 0 0 0 409.28,692.01" fill="none" stroke="rgb(160,160,156)" stroke-width="2.21"/>
<path d="M409.25,691.87 A16.5,16.5 0 0 0 410.04,694.78" fill="none" stroke="rgb(139,139,135)" stroke-width="2.50"/>
<path d="M410.00,694.64 A16.5,16.5 0 0 0 411.28,697.37" fill="none" stroke="rgb(114,114,110)" stroke-width="2.82"/>
<path d="M411.21,697.25 A16.5,16.5 0 0 0 412.95,699.72" fill="none" stroke="rgb(89,89,85)" stroke-width="3.15"/>
<path d="M412.86,699.61 A16.5,16.5 0 0 0 415.00,701.73" fill="none" stroke="rgb(63,63,59)" stroke-width="3.50"/>
<path d="M414.89,701.64 A16.5,16.5 0 0 0 417.38,703.36" fill="none" stroke="rgb(36,36,32)" stroke-width="3.85"/>
<path d="M417.25,703.29 A16.5,16.5 0 0 0 419.99,704.55" fill="none" stroke="rgb(25,25,21)" stroke-width="4.00"/>
<path d="M419.86,704.50 A16.5,16.5 0 0 0 422.78,705.27" fill="none" stroke="rgb(25,25,21)" stroke-width="4.00"/>
<path d="M422.63,705.25 A16.5,16.5 0 0 0 425.64,705.50" fill="none" stroke="rgb(25,25,21)" stroke-width="4.00"/>
<path d="M425.50,705.50 A16.5,16.5 0 0 0 428.51,705.22" fill="none" stroke="rgb(25,25,21)" stroke-width="4.00"/>
<path d="M428.37,705.25 A16.5,16.5 0 0 0 431.28,704.46" fill="none" stroke="rgb(25,25,21)" stroke-width="4.00"/>
<path d="M431.14,704.50 A16.5,16.5 0 0 0 433.87,703.22" fill="none" stroke="rgb(25,25,21)" stroke-width="4.00"/>
<path d="M433.75,703.29 A16.5,16.5 0 0 0 436.22,701.55" fill="none" stroke="rgb(25,25,21)" stroke-width="4.00"/>
<path d="M436.11,701.64 A16.5,16.5 0 0 0 438.23,699.50" fill="none" stroke="rgb(25,25,21)" stroke-width="4.00"/>
<path d="M438.14,699.61 A16.5,16.5 0 0 0 439.86,697.12" fill="none" stroke="rgb(25,25,21)" stroke-width="4.00"/>
<path d="M439.79,697.25 A16.5,16.5 0 0 0 441.05,694.51" fill="none" stroke="rgb(25,25,21)" stroke-width="4.00"/>
<path d="M441.00,694.64 A16.5,16.5 0 0 0 441.77,691.72" fill="none" stroke="rgb(25,25,21)" stroke-width="4.00"/>
<path d="M441.75,691.87 A16.5,16.5 0 0 0 442.00,688.86" fill="none" stroke="rgb(25,25,21)" stroke-width="4.00"/>
<path d="M408.7,682 h7 l-3.5,5z" fill="#1A1AD8"/>
<text x="425.5" y="694" text-anchor="middle" font-size="12" fill="#000" font-family="Liberation Sans">4В</text>
<text x="400.5" y="666.6" font-size="9" fill="#000" font-family="Liberation Sans" textLength="14.5" lengthAdjust="spacingAndGlyphs">10В</text>
<text x="433.7" y="663.7" font-size="9" fill="#000" font-family="Liberation Sans" textLength="19.5" lengthAdjust="spacingAndGlyphs">100В</text>
<text x="390.7" y="683.7" font-size="9" fill="#000" font-family="Liberation Sans" textLength="9.5" lengthAdjust="spacingAndGlyphs">1В</text>
<text x="451.3" y="683" font-size="9" fill="#000" font-family="Liberation Sans" textLength="19.5" lengthAdjust="spacingAndGlyphs">200В</text>
<text x="384.9" y="711.6" font-size="9" fill="#000" font-family="Liberation Sans" textLength="18.5" lengthAdjust="spacingAndGlyphs">0.1В</text>
<text x="446" y="712" font-size="9" fill="#000" font-family="Liberation Sans" textLength="20" lengthAdjust="spacingAndGlyphs">500В</text>
<line x1="515.0" y1="703.0" x2="512.4" y2="705.4" stroke="#B4B2A6" stroke-width="1"/>
<line x1="513.4" y1="701.0" x2="510.5" y2="702.9" stroke="#B4B2A6" stroke-width="1"/>
<line x1="512.0" y1="698.7" x2="508.9" y2="700.2" stroke="#B4B2A6" stroke-width="1"/>
<line x1="511.0" y1="696.2" x2="507.7" y2="697.3" stroke="#B4B2A6" stroke-width="1"/>
<line x1="510.3" y1="693.6" x2="506.9" y2="694.3" stroke="#B4B2A6" stroke-width="1"/>
<line x1="510.0" y1="691.0" x2="506.5" y2="691.2" stroke="#B4B2A6" stroke-width="1"/>
<line x1="510.1" y1="688.3" x2="506.6" y2="688.0" stroke="#B4B2A6" stroke-width="1"/>
<line x1="510.5" y1="685.7" x2="507.1" y2="684.9" stroke="#B4B2A6" stroke-width="1"/>
<line x1="511.2" y1="683.1" x2="508.0" y2="681.9" stroke="#B4B2A6" stroke-width="1"/>
<line x1="512.3" y1="680.7" x2="509.3" y2="679.1" stroke="#B4B2A6" stroke-width="1"/>
<line x1="513.8" y1="678.5" x2="510.9" y2="676.4" stroke="#B4B2A6" stroke-width="1"/>
<line x1="515.5" y1="676.4" x2="513.0" y2="674.0" stroke="#B4B2A6" stroke-width="1"/>
<line x1="517.5" y1="674.7" x2="515.3" y2="671.9" stroke="#B4B2A6" stroke-width="1"/>
<line x1="519.7" y1="673.2" x2="517.9" y2="670.1" stroke="#B4B2A6" stroke-width="1"/>
<line x1="522.0" y1="672.0" x2="520.7" y2="668.7" stroke="#B4B2A6" stroke-width="1"/>
<line x1="524.6" y1="671.1" x2="523.7" y2="667.7" stroke="#B4B2A6" stroke-width="1"/>
<line x1="527.2" y1="670.6" x2="526.8" y2="667.2" stroke="#B4B2A6" stroke-width="1"/>
<line x1="529.8" y1="670.5" x2="529.9" y2="667.0" stroke="#B4B2A6" stroke-width="1"/>
<line x1="532.5" y1="670.7" x2="533.0" y2="667.3" stroke="#B4B2A6" stroke-width="1"/>
<line x1="535.1" y1="671.3" x2="536.1" y2="668.0" stroke="#B4B2A6" stroke-width="1"/>
<line x1="537.6" y1="672.3" x2="539.0" y2="669.1" stroke="#B4B2A6" stroke-width="1"/>
<line x1="539.9" y1="673.5" x2="541.8" y2="670.6" stroke="#B4B2A6" stroke-width="1"/>
<line x1="542.1" y1="675.1" x2="544.3" y2="672.4" stroke="#B4B2A6" stroke-width="1"/>
<line x1="544.0" y1="676.9" x2="546.6" y2="674.6" stroke="#B4B2A6" stroke-width="1"/>
<line x1="545.6" y1="679.0" x2="548.5" y2="677.1" stroke="#B4B2A6" stroke-width="1"/>
<line x1="547.0" y1="681.3" x2="550.1" y2="679.8" stroke="#B4B2A6" stroke-width="1"/>
<line x1="548.0" y1="683.8" x2="551.3" y2="682.7" stroke="#B4B2A6" stroke-width="1"/>
<line x1="548.7" y1="686.4" x2="552.1" y2="685.7" stroke="#B4B2A6" stroke-width="1"/>
<line x1="549.0" y1="689.0" x2="552.5" y2="688.8" stroke="#B4B2A6" stroke-width="1"/>
<line x1="548.9" y1="691.7" x2="552.4" y2="692.0" stroke="#B4B2A6" stroke-width="1"/>
<line x1="548.5" y1="694.3" x2="551.9" y2="695.1" stroke="#B4B2A6" stroke-width="1"/>
<line x1="547.8" y1="696.8" x2="551.0" y2="698.1" stroke="#B4B2A6" stroke-width="1"/>
<line x1="546.7" y1="699.3" x2="549.7" y2="700.9" stroke="#B4B2A6" stroke-width="1"/>
<line x1="545.2" y1="701.5" x2="548.1" y2="703.6" stroke="#B4B2A6" stroke-width="1"/>
<line x1="543.5" y1="703.5" x2="546.0" y2="706.0" stroke="#B4B2A6" stroke-width="1"/>
<line x1="514.5" y1="703.3" x2="510.4" y2="706.9" stroke="#000" stroke-width="1.1"/>
<line x1="517.2" y1="674.2" x2="513.8" y2="669.9" stroke="#000" stroke-width="1.1"/>
<line x1="532.3" y1="670.2" x2="533.0" y2="664.7" stroke="#000" stroke-width="1.1"/>
<line x1="542.1" y1="674.5" x2="545.5" y2="670.2" stroke="#000" stroke-width="1.1"/>
<line x1="548.2" y1="682.8" x2="553.3" y2="680.9" stroke="#000" stroke-width="1.1"/>
<line x1="544.4" y1="703.4" x2="548.5" y2="707.1" stroke="#000" stroke-width="1.1"/>
<circle cx="529.5" cy="690" r="16.5" fill="#EDECE5"/>
<path d="M546.00,690.00 A16.5,16.5 0 0 0 545.72,686.99" fill="none" stroke="rgb(25,25,21)" stroke-width="4.00"/>
<path d="M545.75,687.13 A16.5,16.5 0 0 0 544.96,684.22" fill="none" stroke="rgb(25,25,21)" stroke-width="4.00"/>
<path d="M545.00,684.36 A16.5,16.5 0 0 0 543.72,681.63" fill="none" stroke="rgb(25,25,21)" stroke-width="4.00"/>
<path d="M543.79,681.75 A16.5,16.5 0 0 0 542.05,679.28" fill="none" stroke="rgb(36,36,32)" stroke-width="3.85"/>
<path d="M542.14,679.39 A16.5,16.5 0 0 0 540.00,677.27" fill="none" stroke="rgb(63,63,59)" stroke-width="3.50"/>
<path d="M540.11,677.36 A16.5,16.5 0 0 0 537.62,675.64" fill="none" stroke="rgb(89,89,85)" stroke-width="3.15"/>
<path d="M537.75,675.71 A16.5,16.5 0 0 0 535.01,674.45" fill="none" stroke="rgb(114,114,110)" stroke-width="2.82"/>
<path d="M535.14,674.50 A16.5,16.5 0 0 0 532.22,673.73" fill="none" stroke="rgb(139,139,135)" stroke-width="2.50"/>
<path d="M532.37,673.75 A16.5,16.5 0 0 0 529.36,673.50" fill="none" stroke="rgb(160,160,156)" stroke-width="2.21"/>
<path d="M529.50,673.50 A16.5,16.5 0 0 0 526.49,673.78" fill="none" stroke="rgb(179,179,175)" stroke-width="1.97"/>
<path d="M526.63,673.75 A16.5,16.5 0 0 0 523.72,674.54" fill="none" stroke="rgb(194,194,190)" stroke-width="1.77"/>
<path d="M523.86,674.50 A16.5,16.5 0 0 0 521.13,675.78" fill="none" stroke="rgb(205,205,201)" stroke-width="1.62"/>
<path d="M521.25,675.71 A16.5,16.5 0 0 0 518.78,677.45" fill="none" stroke="rgb(212,212,208)" stroke-width="1.53"/>
<path d="M518.89,677.36 A16.5,16.5 0 0 0 516.77,679.50" fill="none" stroke="rgb(215,215,211)" stroke-width="1.50"/>
<path d="M516.86,679.39 A16.5,16.5 0 0 0 515.14,681.88" fill="none" stroke="rgb(212,212,208)" stroke-width="1.53"/>
<path d="M515.21,681.75 A16.5,16.5 0 0 0 513.95,684.49" fill="none" stroke="rgb(205,205,201)" stroke-width="1.62"/>
<path d="M514.00,684.36 A16.5,16.5 0 0 0 513.23,687.28" fill="none" stroke="rgb(194,194,190)" stroke-width="1.77"/>
<path d="M513.25,687.13 A16.5,16.5 0 0 0 513.00,690.14" fill="none" stroke="rgb(179,179,175)" stroke-width="1.97"/>
<path d="M513.00,690.00 A16.5,16.5 0 0 0 513.28,693.01" fill="none" stroke="rgb(160,160,156)" stroke-width="2.21"/>
<path d="M513.25,692.87 A16.5,16.5 0 0 0 514.04,695.78" fill="none" stroke="rgb(139,139,135)" stroke-width="2.50"/>
<path d="M514.00,695.64 A16.5,16.5 0 0 0 515.28,698.37" fill="none" stroke="rgb(114,114,110)" stroke-width="2.82"/>
<path d="M515.21,698.25 A16.5,16.5 0 0 0 516.95,700.72" fill="none" stroke="rgb(89,89,85)" stroke-width="3.15"/>
<path d="M516.86,700.61 A16.5,16.5 0 0 0 519.00,702.73" fill="none" stroke="rgb(63,63,59)" stroke-width="3.50"/>
<path d="M518.89,702.64 A16.5,16.5 0 0 0 521.38,704.36" fill="none" stroke="rgb(36,36,32)" stroke-width="3.85"/>
<path d="M521.25,704.29 A16.5,16.5 0 0 0 523.99,705.55" fill="none" stroke="rgb(25,25,21)" stroke-width="4.00"/>
<path d="M523.86,705.50 A16.5,16.5 0 0 0 526.78,706.27" fill="none" stroke="rgb(25,25,21)" stroke-width="4.00"/>
<path d="M526.63,706.25 A16.5,16.5 0 0 0 529.64,706.50" fill="none" stroke="rgb(25,25,21)" stroke-width="4.00"/>
<path d="M529.50,706.50 A16.5,16.5 0 0 0 532.51,706.22" fill="none" stroke="rgb(25,25,21)" stroke-width="4.00"/>
<path d="M532.37,706.25 A16.5,16.5 0 0 0 535.28,705.46" fill="none" stroke="rgb(25,25,21)" stroke-width="4.00"/>
<path d="M535.14,705.50 A16.5,16.5 0 0 0 537.87,704.22" fill="none" stroke="rgb(25,25,21)" stroke-width="4.00"/>
<path d="M537.75,704.29 A16.5,16.5 0 0 0 540.22,702.55" fill="none" stroke="rgb(25,25,21)" stroke-width="4.00"/>
<path d="M540.11,702.64 A16.5,16.5 0 0 0 542.23,700.50" fill="none" stroke="rgb(25,25,21)" stroke-width="4.00"/>
<path d="M542.14,700.61 A16.5,16.5 0 0 0 543.86,698.12" fill="none" stroke="rgb(25,25,21)" stroke-width="4.00"/>
<path d="M543.79,698.25 A16.5,16.5 0 0 0 545.05,695.51" fill="none" stroke="rgb(25,25,21)" stroke-width="4.00"/>
<path d="M545.00,695.64 A16.5,16.5 0 0 0 545.77,692.72" fill="none" stroke="rgb(25,25,21)" stroke-width="4.00"/>
<path d="M545.75,692.87 A16.5,16.5 0 0 0 546.00,689.86" fill="none" stroke="rgb(25,25,21)" stroke-width="4.00"/>
<path d="M514.2,679 h7 l-3.5,5z" fill="#1A1AD8"/>
<text x="529.5" y="695" text-anchor="middle" font-size="12" fill="#000" font-family="Liberation Sans">50К</text>
<text x="491.8" y="671.5" font-size="9" fill="#000" font-family="Liberation Sans" textLength="20" lengthAdjust="spacingAndGlyphs">100К</text>
<text x="526" y="661.7" font-size="9" fill="#000" font-family="Liberation Sans" textLength="21" lengthAdjust="spacingAndGlyphs">250К</text>
<text x="547" y="671.5" font-size="9" fill="#000" font-family="Liberation Sans" textLength="21" lengthAdjust="spacingAndGlyphs">333К</text>
<text x="554.8" y="683.7" font-size="9" fill="#000" font-family="Liberation Sans" textLength="21" lengthAdjust="spacingAndGlyphs">500К</text>
<text x="497.7" y="711.5" font-size="9" fill="#000" font-family="Liberation Sans" textLength="10.3" lengthAdjust="spacingAndGlyphs">1К</text>
<text x="550.9" y="711" font-size="9" fill="#000" font-family="Liberation Sans" textLength="11.2" lengthAdjust="spacingAndGlyphs">1М</text>
</svg>
<!-- frequency -->
<div class="t" style="left:485px;top:641px;padding:0 1px;background:#ECE9D8;font-size:12.5px;font-weight:bold;color:#1A1A6A">Частота</div>


<!-- sync -->
<div class="t" style="left:596px;top:641px;padding:0 1px;background:#ECE9D8;font-size:11.5px;font-weight:bold;color:#B4B2A8">Синхронизация</div>
<svg class="a" style="left:596px;top:655px" width="115" height="56" viewBox="596 655 115 56">
 <path d="M601,665 l5,3 l-5,3z" fill="#1A20D0"/><path d="M606,668 h12" stroke="#1A20D0" stroke-dasharray="1 1"/>
 <path d="M602,675 C608,675 608,660 616,660" fill="none" stroke="#E02020" stroke-width="1.3"/>
 <path d="M634,674 h5 v-12 h9" fill="none" stroke="#B0AEA4" stroke-width="1.5"/><path d="M641,668 l2,-3 l2,3 M643,665 v6" fill="none" stroke="#B0AEA4"/>
 <rect x="659" y="659" width="20" height="19" fill="#F6F5F0"/>
 <path d="M660,662 h9 v12 h8" fill="none" stroke="#B0AEA4" stroke-width="1.5"/><path d="M671,668 v6 M669,671 l2,3 l2,-3" fill="none" stroke="#B0AEA4"/>
 <path d="M685,665 l5,3 l-5,3z" fill="#1A20D0"/><path d="M690,668 h12" stroke="#1A20D0" stroke-dasharray="1 1"/>
 <path d="M686,675 C692,675 692,660 700,660" fill="none" stroke="#E02020" stroke-width="1.3"/>
 <path d="M694,668 v9 l2,-2 l2,3 l1,-1 l-2,-3 h3z" fill="#F0E020" stroke="#000" stroke-width="0.6"/>
 <rect x="598.5" y="687.5" width="46" height="20" fill="#F0EFE8" stroke="#B8B6AA"/>
 <text x="603" y="702" font-size="12" fill="#8A8A84" font-family="Liberation Sans">2</text>
 <path d="M629,696 h7 l-3.5,4z" fill="#A8A8A0"/>
 <path d="M660,692 h14 M660,702 h14 M662,697 h10" stroke="#B8B6AA" stroke-width="1"/><path d="M664,689 l3,3 l3,-3 M664,705 l3,-3 l3,3" fill="none" stroke="#B0AEA4" stroke-width="1.5"/>
 <path d="M686,697 h17 M686,693 l7,4 l-7,4z M703,693 l-7,4 l7,4z" fill="#B0AEA4" stroke="#B0AEA4" stroke-width="1"/>
</svg>

<!-- control -->
<div class="t" style="left:725px;top:641px;padding:0 1px;background:#ECE9D8;font-size:12px;font-weight:bold;color:#1A4AC0">Управление</div>
<div class="a" style="left:723px;top:656px;width:40px;height:27px;background:#EEEDE6;border:1px solid #D8D6CA;border-radius:2px"></div>
<div class="a" style="left:737px;top:663px;width:5px;height:14px;background:#A8A8A8;border:1px solid #707070"></div>
<div class="a" style="left:744px;top:663px;width:5px;height:14px;background:#A8A8A8;border:1px solid #707070"></div>
<div class="a" style="left:766px;top:656px;width:40px;height:28px;background:linear-gradient(#F4F4F8,#DCDCE4);border:2px solid #2A3A6A;border-radius:2px"></div>
<svg class="a" style="left:770px;top:660px" width="32" height="20"><path d="M2,9 C7,-3 11,-3 16,9 S25,21 30,9" fill="none" stroke="#D02020" stroke-width="1.3"/></svg>
<div class="a" style="left:809px;top:656px;width:40px;height:28px;background:#fff;border:2px solid #D83030;border-radius:2px"></div>
<svg class="a" style="left:812px;top:660px" width="34" height="20"><path d="M3,7 l2,-3 l2,5 l2,-4 l2,3 l2,-3 l2,4 l2,-3 l2,3 l2,-4 l2,4 l2,-3 l2,2 l2,-2" fill="none" stroke="#C02020" stroke-width="1.1"/><path d="M3,15 l2,-3 l2,5 l2,-4 l2,3 l2,-3 l2,4 l2,-3 l2,3 l2,-4 l2,4 l2,-3 l2,2 l2,-2" fill="none" stroke="#1A20A0" stroke-width="1.1"/><path d="M33,4 l-4,3 l4,3z M33,12 l-4,3 l4,3z" fill="#000"/></svg>
<div class="a" style="left:723px;top:686px;width:83px;height:28px;background:linear-gradient(#FAFAF6,#E4E3DC);border:2px solid #2A3A5A;border-radius:3px"></div>
<div class="a" style="left:733px;top:691px;border-top:9px solid transparent;border-bottom:9px solid transparent;border-left:10px solid #20D020"></div>
<div class="t" style="left:762px;top:693px;font-size:12.5px;font-weight:bold">Пуск</div>
<div class="t" style="left:822px;top:701px;font-size:13px;font-weight:bold;color:#1A8A1A">8.73</div>

<!-- Status bar -->
<div class="a" style="left:0;top:716px;width:1024px;height:1px;background:#A8A594"></div>
<div class="a" style="left:0;top:717px;width:1024px;height:1px;background:#FAFAF6"></div>
<div class="a" style="left:0;top:718px;width:1024px;height:20px;background:#ECE9D8"></div>
<div class="a" style="left:189px;top:721px;width:1px;height:16px;background:#C0BDAD"></div>
<div class="a" style="left:192px;top:721px;width:782px;height:17px;border-left:1px solid #B0AD9D;border-top:1px solid #B0AD9D"></div>
<div class="a" style="left:975px;top:721px;width:49px;height:17px;border-left:1px solid #B0AD9D;border-top:1px solid #B0AD9D"></div>
<div class="t" style="left:5px;top:724px;font-size:10.8px">USB Осциллограф не подключен</div>
<div class="t" style="left:979px;top:724px;font-size:12px">1.6.2</div>

<!-- Taskbar -->
<div class="a" style="left:0;top:738px;width:1024px;height:30px;background:linear-gradient(#3D7BE8 0%,#5A9AF0 6%,#3272E0 14%,#245EDB 40%,#2360DB 85%,#1E4DB8 100%)"></div>
<div class="a" style="left:0;top:738px;width:86px;height:30px;background:linear-gradient(#3C9A3C 0%,#6CC06A 10%,#3A9A38 30%,#349234 80%,#2A7A2A 100%);border-radius:0 12px 12px 0"></div>
<svg class="a" style="left:8px;top:743px" width="18" height="20"><path d="M2,3 q3,-1 6,1 l-1,6 q-3,-2 -6,-1z" fill="#F04A20"/><path d="M9,4 q3,2 7,1 l-1,6 q-4,1 -7,-1z" fill="#40B040"/><path d="M1,10 q3,-1 6,1 l-1,6 q-3,-2 -6,-1z" fill="#2070E0"/><path d="M8,11 q3,2 7,1 l-1,6 q-4,1 -7,-1z" fill="#F8C020"/></svg>
<div class="t" style="left:26px;top:744px;font-size:17px;font-weight:bold;font-style:italic;color:#fff">пуск</div>
<svg class="a" style="left:103px;top:744px" width="18" height="18"><path d="M2,8 h14 l-2,7 h-12z" fill="#D8E4F8" stroke="#506090" stroke-width="0.8"/><path d="M4,10 h9 M4,12 h9" stroke="#8090B0"/><path d="M9,8 l5,-6" stroke="#506090" stroke-width="1.5"/></svg>
<div class="tsk" style="left:134px;width:157px"></div>
<svg class="a" style="left:142px;top:744px" width="18" height="18"><rect x="3" y="2" width="10" height="14" fill="#E8C050" stroke="#8A6A20" stroke-width="0.8"/><rect x="5" y="3" width="10" height="13" fill="#F8D870" stroke="#8A6A20" stroke-width="0.8"/></svg>
<div class="t" style="left:162px;top:748px;font-size:11px;color:#fff">E:\Диагностика\Dia...</div>
<div class="tsk act" style="left:293px;width:160px"></div>
<svg class="a" style="left:302px;top:745px" width="16" height="16"><rect x="0.5" y="0.5" width="15" height="15" fill="#1A2F8F" stroke="#D8E4FF"/><polyline points="2,8 4,8 5,5 6,11 7,3 8,13 9,4 10,11 11,6 12,9 14,8" fill="none" stroke="#fff"/></svg>
<div class="t" style="left:323px;top:748px;font-size:11px;color:#fff">Diamag 2</div>
<div class="tsk" style="left:454px;width:158px"></div>
<svg class="a" style="left:463px;top:745px" width="16" height="16"><circle cx="8" cy="8" r="7.5" fill="#E0402A"/><path d="M8,8 L1.5,4.25 A7.5,7.5 0 0 0 8,15.5z" fill="#30A040"/><path d="M8,8 L8,15.5 A7.5,7.5 0 0 0 14.5,4.25z" fill="#F8C820"/><circle cx="8" cy="8" r="3.5" fill="#3A78E0" stroke="#fff" stroke-width="1.2"/></svg>
<div class="t" style="left:482px;top:748px;font-size:11px;color:#fff">Аварии Астрахань - ...</div>
<div class="a" style="left:913px;top:738px;width:111px;height:30px;background:linear-gradient(#1E98F0 0%,#30A8F8 10%,#1890E8 40%,#1A8CE6 85%,#1570C8 100%);border-left:1px solid #103A90"></div>
<svg class="a" style="left:903px;top:744px" width="20" height="20"><circle cx="10" cy="10" r="8.5" fill="#4A90E8" stroke="#BFE0FF" stroke-width="1"/><path d="M12,6 l-4,4 l4,4" fill="none" stroke="#fff" stroke-width="2"/></svg>
<svg class="a" style="left:924px;top:745px" width="18" height="18"><path d="M2,6 h3 l4,-4 v14 l-4,-4 h-3z" fill="#E8F0F8" stroke="#5070A0" stroke-width="0.6"/><path d="M11,6 q2,3 0,6 M13,4 q3.5,5 0,10" fill="none" stroke="#B0F0A0" stroke-width="1.2"/></svg>
<svg class="a" style="left:943px;top:744px" width="14" height="18"><ellipse cx="7" cy="9" rx="6" ry="8.5" fill="#1A5AB0"/><path d="M4,5.5 l6,6 l-3,2.5 v-10 l3,2.5 l-6,6" fill="none" stroke="#fff" stroke-width="1.2"/></svg>
<svg class="a" style="left:960px;top:745px" width="17" height="17"><circle cx="8.5" cy="8.5" r="8" fill="#F0A020"/><circle cx="8.5" cy="8.5" r="4.5" fill="none" stroke="#fff" stroke-width="2"/><path d="M10,12 l3,2" stroke="#fff" stroke-width="2"/></svg>
<div class="t" style="left:985px;top:748px;font-size:11px;color:#fff">0:16</div>

</body></html>
